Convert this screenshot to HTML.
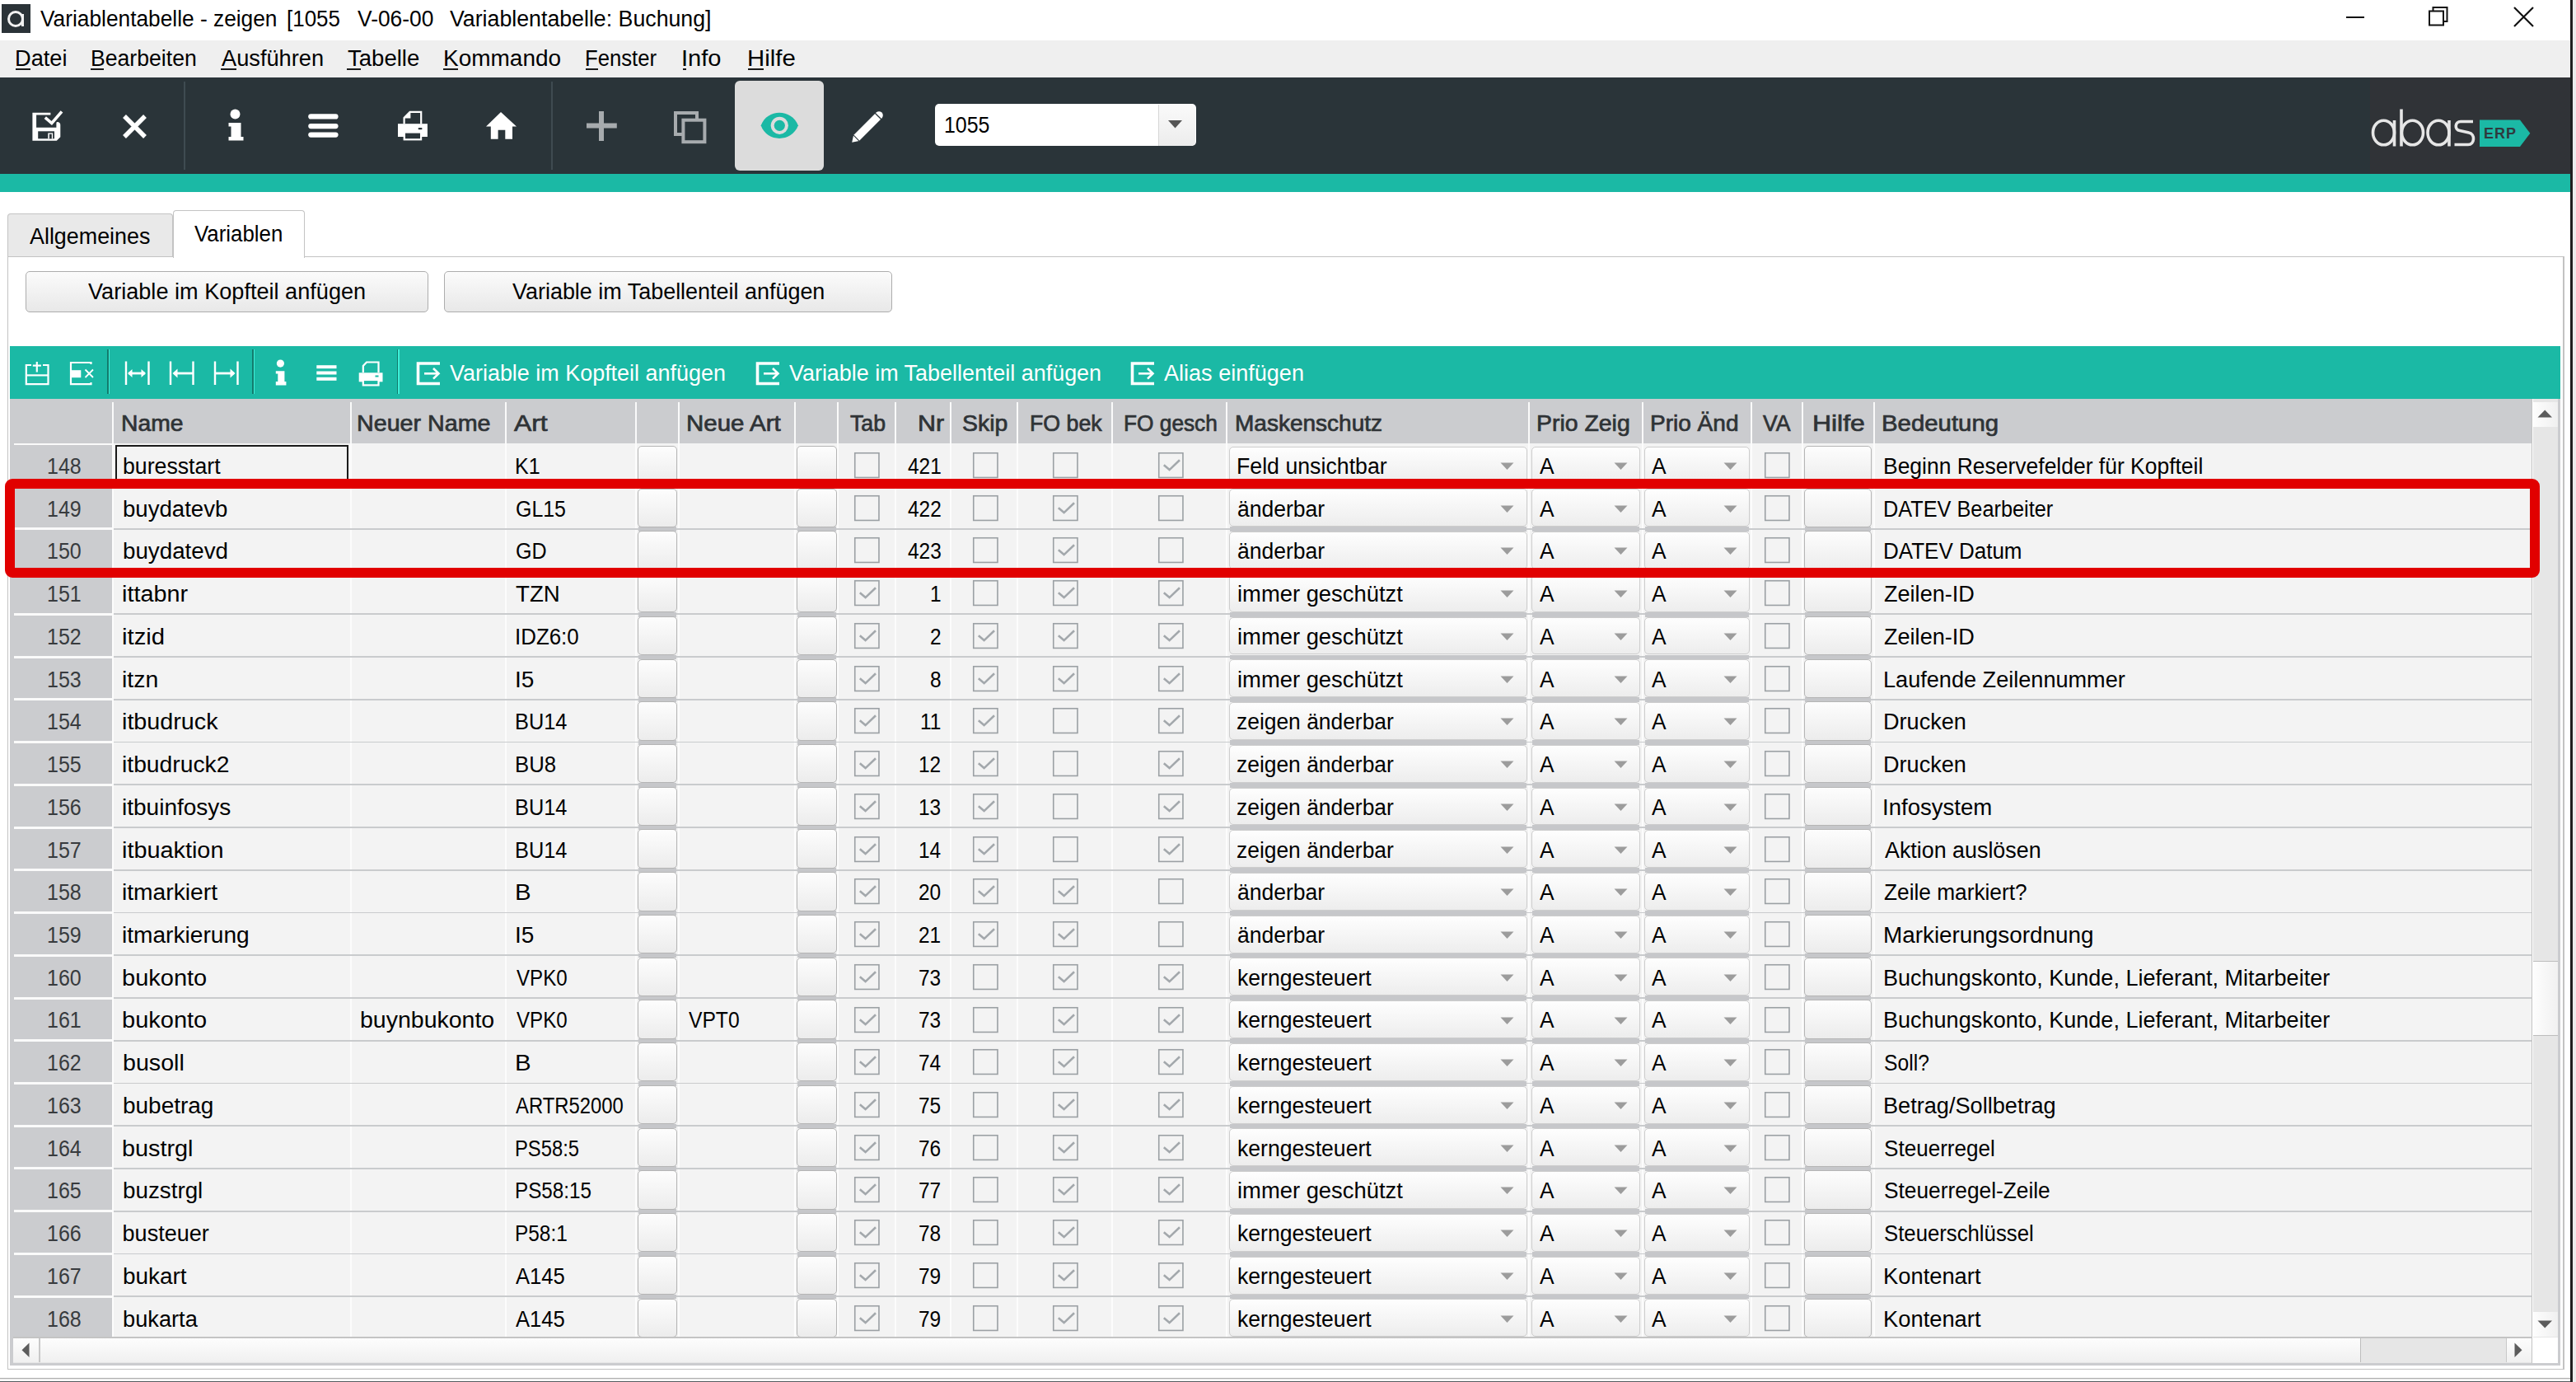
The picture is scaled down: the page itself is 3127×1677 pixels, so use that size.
<!DOCTYPE html>
<html><head><meta charset="utf-8"><style>
html,body{margin:0;padding:0;}
body{width:3127px;height:1677px;position:relative;overflow:hidden;background:#fff;font-family:"Liberation Sans",sans-serif;}
body>div,body>svg{position:absolute;}
.t{white-space:nowrap;}
</style></head><body>
<div style="left:0.00px;top:0.00px;width:3120.00px;height:49.40px;background:#fff"></div>
<div style="left:0.00px;top:49.40px;width:3120.00px;height:44.60px;background:#efefef"></div>
<div style="left:3120.00px;top:0.00px;width:3.00px;height:1677.00px;background:#1f1f1f"></div>
<div style="left:3123.00px;top:0.00px;width:4.00px;height:1677.00px;background:#ececec"></div>
<div style="left:1.50px;top:4.50px;width:35.50px;height:35.50px;background:#2b3338"></div>
<svg style="position:absolute;left:1.50px;top:4.50px;width:35.5px;height:35.5px;overflow:visible" viewBox="0 0 35.5 35.5"><circle cx="17" cy="18" r="8.5" fill="none" stroke="#f2f2f2" stroke-width="3"/><line x1="25.5" y1="12" x2="25.5" y2="27" stroke="#f2f2f2" stroke-width="3"/></svg>
<div class="t" style="left:48.80px;top:10.34px;font-size:27px;line-height:27px;font-weight:400;color:#000;transform:scaleX(0.9738);transform-origin:0 0;">Variablentabelle - zeigen</div>
<div class="t" style="left:348.47px;top:10.34px;font-size:27px;line-height:27px;font-weight:400;color:#000;transform:scaleX(0.9612);transform-origin:0 0;">[1055</div>
<div class="t" style="left:433.90px;top:10.34px;font-size:27px;line-height:27px;font-weight:400;color:#000;transform:scaleX(0.9764);transform-origin:0 0;">V-06-00</div>
<div class="t" style="left:546.40px;top:10.34px;font-size:27px;line-height:27px;font-weight:400;color:#000;transform:scaleX(0.9900);transform-origin:0 0;">Variablentabelle: Buchung]</div>
<div style="left:2847.50px;top:20.20px;width:22.50px;height:2.20px;background:#111"></div>
<svg style="position:absolute;left:2947.00px;top:7.00px;width:28px;height:28px;overflow:visible" viewBox="0 0 28 28"><rect x="2" y="6.5" width="17" height="17" fill="none" stroke="#111" stroke-width="2"/><path d="M6.5 6.5 V2 H23.5 V19 H19" fill="none" stroke="#111" stroke-width="2"/></svg>
<svg style="position:absolute;left:3050.00px;top:7.00px;width:28px;height:28px;overflow:visible" viewBox="0 0 28 28"><path d="M2 2 L25 25 M25 2 L2 25" stroke="#111" stroke-width="2.2"/></svg>
<div class="t" style="left:17.89px;top:57.64px;font-size:27px;line-height:27px;font-weight:400;color:#000;transform:scaleX(1.0068);transform-origin:0 0;">Datei</div>
<div style="left:18.60px;top:83.00px;width:18.11px;height:2.30px;background:#1a1a1a"></div>
<div class="t" style="left:109.63px;top:57.64px;font-size:27px;line-height:27px;font-weight:400;color:#000;transform:scaleX(0.9858);transform-origin:0 0;">Bearbeiten</div>
<div style="left:110.30px;top:83.00px;width:16.20px;height:2.30px;background:#1a1a1a"></div>
<div class="t" style="left:268.90px;top:57.64px;font-size:27px;line-height:27px;font-weight:400;color:#000;transform:scaleX(1.0082);transform-origin:0 0;">Ausführen</div>
<div style="left:267.50px;top:83.00px;width:19.95px;height:2.30px;background:#1a1a1a"></div>
<div class="t" style="left:421.69px;top:57.64px;font-size:27px;line-height:27px;font-weight:400;color:#000;transform:scaleX(1.0203);transform-origin:0 0;">Tabelle</div>
<div style="left:420.80px;top:83.00px;width:17.61px;height:2.30px;background:#1a1a1a"></div>
<div class="t" style="left:537.52px;top:57.64px;font-size:27px;line-height:27px;font-weight:400;color:#000;transform:scaleX(1.0364);transform-origin:0 0;">Kommando</div>
<div style="left:538.30px;top:83.00px;width:18.06px;height:2.30px;background:#1a1a1a"></div>
<div class="t" style="left:710.41px;top:57.64px;font-size:27px;line-height:27px;font-weight:400;color:#000;transform:scaleX(0.9505);transform-origin:0 0;">Fenster</div>
<div style="left:711.00px;top:83.00px;width:14.55px;height:2.30px;background:#1a1a1a"></div>
<div class="t" style="left:827.31px;top:57.64px;font-size:27px;line-height:27px;font-weight:400;color:#000;transform:scaleX(1.0773);transform-origin:0 0;">Info</div>
<div style="left:828.50px;top:83.00px;width:4.69px;height:2.30px;background:#1a1a1a"></div>
<div class="t" style="left:907.41px;top:57.64px;font-size:27px;line-height:27px;font-weight:400;color:#000;transform:scaleX(1.0870);transform-origin:0 0;">Hilfe</div>
<div style="left:908.30px;top:83.00px;width:18.41px;height:2.30px;background:#1a1a1a"></div>
<div style="left:0.00px;top:94.00px;width:3120.00px;height:116.80px;background:#2a3439"></div>
<div style="left:2877.00px;top:94.00px;width:243.00px;height:116.80px;background:#303337"></div>
<div style="left:223.20px;top:99.00px;width:1.60px;height:107.00px;background:#3f4b51"></div>
<div style="left:669.40px;top:99.00px;width:1.60px;height:107.00px;background:#3f4b51"></div>
<svg style="position:absolute;left:38.00px;top:133.00px;width:40px;height:40px;overflow:visible" viewBox="0 0 40 40"><path d="M1.4 3.7 H23.4 V6.5 H6.1 V21.8 H30.4 V16.5 Q30.4 14.8 32.2 15.1 Q35.3 15.8 35.3 18.5 V33.2 L30.8 37.7 H1.4 Z" fill="#fff"/><rect x="8.2" y="26.3" width="19.8" height="9" fill="#2a3439"/><rect x="20.3" y="28.4" width="5.9" height="6.9" fill="#fff"/><rect x="21.9" y="29.7" width="2.9" height="5.6" fill="#2a3439"/><path d="M16.8 9.6 L24.8 16.5 L37 2.3" fill="none" stroke="#fff" stroke-width="3.6"/></svg>
<svg style="position:absolute;left:148.00px;top:138.00px;width:32px;height:32px;overflow:visible" viewBox="0 0 32 32"><path d="M3 3 L28 28 M28 3 L3 28" stroke="#fff" stroke-width="5.5"/></svg>
<svg style="position:absolute;left:276.00px;top:131.00px;width:22px;height:41px;overflow:visible" viewBox="0 0 22 41"><circle cx="9.5" cy="7.5" r="6" fill="#fff"/><path d="M1.5 18 H16.5 V35 H19.5 V39.6 H1.5 V35 H4.5 V22.5 H1.5 Z" fill="#fff"/></svg>
<svg style="position:absolute;left:374.00px;top:137.00px;width:38px;height:32px;overflow:visible" viewBox="0 0 38 32"><g stroke="#fff" stroke-width="6.2" stroke-linecap="round"><line x1="3.3" y1="4.4" x2="33.5" y2="4.4"/><line x1="3.3" y1="16.1" x2="33.5" y2="16.1"/><line x1="3.3" y1="26.6" x2="33.5" y2="26.6"/></g></svg>
<svg style="position:absolute;left:482.00px;top:133.00px;width:38px;height:39px;overflow:visible" viewBox="0 0 38 39"><path d="M8.6 17.5 V10 L15.6 2.9 H29.2 V17.5" fill="none" stroke="#fff" stroke-width="2.2"/><path d="M8.6 10.6 H16.4 V3 Z" fill="#fff"/><rect x="1" y="17.2" width="35.9" height="15.8" fill="#fff"/><rect x="7.6" y="28.3" width="22.6" height="9.1" fill="#fff"/><rect x="10" y="28.6" width="18" height="6.6" fill="#2a3439"/><rect x="25.6" y="22" width="4.9" height="2.3" rx="1" fill="#2a3439"/></svg>
<svg style="position:absolute;left:589.00px;top:135.00px;width:39px;height:35px;overflow:visible" viewBox="0 0 39 35"><path d="M19 1 L38 18.5 H33 V33.8 H24.3 V22.7 H15.6 V33.8 H6.8 V18.5 H1 Z" fill="#fff"/></svg>
<svg style="position:absolute;left:711.00px;top:134.00px;width:39px;height:38px;overflow:visible" viewBox="0 0 39 38"><path d="M19 1 V37 M1 18.5 H37.8" stroke="#a7abae" stroke-width="6"/></svg>
<svg style="position:absolute;left:816.00px;top:133.00px;width:42px;height:42px;overflow:visible" viewBox="0 0 42 42"><path d="M12 30 H4 V4 H30 V11" fill="none" stroke="#a7abae" stroke-width="4"/><rect x="13.4" y="12.7" width="26" height="26.5" fill="none" stroke="#a7abae" stroke-width="4"/></svg>
<div style="left:892.30px;top:98.40px;width:107.70px;height:108.60px;background:#dcdcdc;border-radius:6px"></div>
<svg style="position:absolute;left:922.00px;top:135.00px;width:49px;height:35px;overflow:visible" viewBox="0 0 49 35"><path d="M1.7 17.3 C9 -3.5 39 -3.5 46.9 17.3 C39 38.1 9 38.1 1.7 17.3 Z" fill="#1bb9a5"/><circle cx="24.3" cy="17.3" r="10.6" fill="#dcdcdc"/><circle cx="24.3" cy="17.3" r="6.6" fill="#1bb9a5"/></svg>
<svg style="position:absolute;left:1032.00px;top:133.00px;width:42px;height:42px;overflow:visible" viewBox="0 0 42 42"><path d="M7.5 34.5 L34 8" stroke="#fff" stroke-width="9.6"/><circle cx="35" cy="7" r="4.8" fill="#fff"/><path d="M4.1 31.1 L10.9 37.9 L2.2 39.8 Z" fill="#fff"/><path d="M30.2 4.2 L37.8 11.8" stroke="#2a3439" stroke-width="1.3"/><path d="M4.2 31.2 L10.8 37.8" stroke="#2a3439" stroke-width="1.1"/></svg>
<div style="left:1135.30px;top:126.10px;width:316.30px;height:51.30px;background:#fff;border-radius:5px"></div>
<div style="left:1405.50px;top:127.00px;width:1.50px;height:49.50px;background:#d6d6d6"></div>
<div style="left:1407.00px;top:127.00px;width:43.50px;height:49.50px;background:linear-gradient(#fafafa,#ececec);border-radius:0 5px 5px 0"></div>
<svg style="position:absolute;left:1417.00px;top:145.00px;width:20px;height:12px;overflow:visible" viewBox="0 0 20 12"><path d="M1 1 H18 L9.5 10.5 Z" fill="#555"/></svg>
<div class="t" style="left:1146.15px;top:138.64px;font-size:27px;line-height:27px;font-weight:400;color:#000;transform:scaleX(0.9227);transform-origin:0 0;">1055</div>
<svg style="position:absolute;left:2879.00px;top:144.00px;width:200px;height:40px;overflow:visible" viewBox="0 0 200 40"><g fill="none" stroke="#e6e6e6" stroke-width="3.6"><ellipse cx="14.5" cy="17" rx="13" ry="14.8"/><line x1="27.5" y1="2" x2="27.5" y2="33.5"/><line x1="36" y1="-11.5" x2="36" y2="33.5"/><ellipse cx="49.5" cy="17" rx="13" ry="14.8"/><ellipse cx="81" cy="17" rx="13" ry="14.8"/><line x1="94" y1="2" x2="94" y2="33.5"/><path d="M123 3.5 H108 C101 3.5 100 13.5 107 14.5 L118 17 C126 18.5 125 31.5 117 31.5 H100.5"/></g><path d="M131 1.5 H180 L192.3 17.8 L180 34 H131 Z" fill="#1bb9a5"/></svg>
<div class="t" style="left:3015px;top:153px;font-size:18px;line-height:18px;font-weight:700;color:#2f3a3e;letter-spacing:1px">ERP</div>
<div style="left:0.00px;top:210.80px;width:3120.00px;height:22.50px;background:#1bb9a5"></div>
<div style="left:8.50px;top:259.40px;width:201.10px;height:52.60px;background:#e9e9e9;border:1.5px solid #c3c3c3;border-bottom:none;border-radius:4px 4px 0 0;box-sizing:border-box"></div>
<div style="left:209.60px;top:254.80px;width:160.00px;height:58.20px;background:#fff;border:1.5px solid #c3c3c3;border-bottom:none;border-radius:4px 4px 0 0;box-sizing:border-box"></div>
<div class="t" style="left:35.60px;top:273.84px;font-size:27px;line-height:27px;font-weight:400;color:#000;transform:scaleX(0.9952);transform-origin:0 0;">Allgemeines</div>
<div class="t" style="left:235.90px;top:271.44px;font-size:27px;line-height:27px;font-weight:400;color:#000;transform:scaleX(0.9574);transform-origin:0 0;">Variablen</div>
<div style="left:8.50px;top:310.80px;width:201.10px;height:1.50px;background:#c3c3c3"></div>
<div style="left:369.60px;top:310.80px;width:2742.90px;height:1.50px;background:#c3c3c3"></div>
<div style="left:8.50px;top:310.80px;width:1.50px;height:1351.20px;background:#c3c3c3"></div>
<div style="left:8.50px;top:1660.50px;width:3104.00px;height:1.50px;background:#c3c3c3"></div>
<div style="left:3111.00px;top:310.80px;width:1.50px;height:1351.20px;background:#c3c3c3"></div>
<div style="left:30.70px;top:329.30px;width:489.30px;height:50.10px;background:linear-gradient(#fbfbfb,#e8e8e8);border:1.5px solid #adadad;border-radius:5px;box-sizing:border-box"></div>
<div style="left:539.30px;top:329.30px;width:544.00px;height:50.10px;background:linear-gradient(#fbfbfb,#e8e8e8);border:1.5px solid #adadad;border-radius:5px;box-sizing:border-box"></div>
<div class="t" style="left:106.60px;top:341.34px;font-size:27px;line-height:27px;font-weight:400;color:#000;transform:scaleX(1.0042);transform-origin:0 0;">Variable im Kopfteil anfügen</div>
<div class="t" style="left:622.40px;top:341.34px;font-size:27px;line-height:27px;font-weight:400;color:#000;transform:scaleX(0.9976);transform-origin:0 0;">Variable im Tabellenteil anfügen</div>
<div style="left:12.40px;top:420.20px;width:3096.00px;height:63.40px;background:#1bb9a5"></div>
<div style="left:130.00px;top:424.00px;width:1.50px;height:54.00px;background:#137a6c"></div>
<div style="left:131.50px;top:424.00px;width:1.50px;height:54.00px;background:#3ef0d8"></div>
<div style="left:306.00px;top:424.00px;width:1.50px;height:54.00px;background:#137a6c"></div>
<div style="left:307.50px;top:424.00px;width:1.50px;height:54.00px;background:#3ef0d8"></div>
<div style="left:481.50px;top:424.00px;width:1.50px;height:54.00px;background:#137a6c"></div>
<div style="left:483.00px;top:424.00px;width:1.50px;height:54.00px;background:#3ef0d8"></div>
<svg style="position:absolute;left:29.00px;top:437.00px;width:33px;height:33px;overflow:visible" viewBox="0 0 33 33"><g fill="none" stroke="#fff" stroke-width="2.2"><path d="M9 6 H2.8 V29.2 H29.5 V6 H23"/><line x1="2.8" y1="18.4" x2="29.5" y2="18.4"/><line x1="15.8" y1="2" x2="15.8" y2="14.5"/><line x1="10.8" y1="6.6" x2="20.9" y2="6.6"/></g></svg>
<svg style="position:absolute;left:83.00px;top:437.00px;width:33px;height:33px;overflow:visible" viewBox="0 0 33 33"><g fill="none" stroke="#fff" stroke-width="2.2"><path d="M27.5 5 V3 H3 V29.2 H27.5 V27"/></g><rect x="4" y="12.2" width="11.3" height="9" fill="#fff"/><path d="M20.5 11.5 L30 21 M30 11.5 L20.5 21" stroke="#fff" stroke-width="1.8"/></svg>
<svg style="position:absolute;left:152.00px;top:437.00px;width:30px;height:32px;overflow:visible" viewBox="0 0 30 32"><path d="M1 1.5 V30 M28.5 1.5 V30" stroke="#fff" stroke-width="2.4"/><path d="M4 16 H24" stroke="#fff" stroke-width="2.8"/><path d="M3 16 L8.5 11 V21 Z M25 16 L19.5 11 V21 Z" fill="#fff"/></svg>
<svg style="position:absolute;left:206.00px;top:437.00px;width:30px;height:32px;overflow:visible" viewBox="0 0 30 32"><path d="M1 1.5 V30 M28.5 1.5 V30" stroke="#fff" stroke-width="2.4"/><path d="M5 16 H28" stroke="#fff" stroke-width="2.8"/><path d="M3.5 16 L9.5 10.5 V21.5 Z" fill="#fff"/></svg>
<svg style="position:absolute;left:260.00px;top:437.00px;width:30px;height:32px;overflow:visible" viewBox="0 0 30 32"><path d="M1 1.5 V30 M28.5 1.5 V30" stroke="#fff" stroke-width="2.4"/><path d="M1 16 H24" stroke="#fff" stroke-width="2.8"/><path d="M25.5 16 L19.5 10.5 V21.5 Z" fill="#fff"/></svg>
<svg style="position:absolute;left:333.00px;top:435.00px;width:17px;height:34px;overflow:visible" viewBox="0 0 17 34"><circle cx="7.4" cy="6.1" r="4.6" fill="#fff"/><path d="M1.8 15.2 H12.4 V28 H14.4 V32.4 H1.8 V28 H4.3 V18.5 H1.8 Z" fill="#fff"/></svg>
<svg style="position:absolute;left:383.00px;top:441.00px;width:27px;height:22px;overflow:visible" viewBox="0 0 27 22"><g stroke="#fff" stroke-width="4"><line x1="1.3" y1="4.2" x2="25.5" y2="4.2"/><line x1="1.3" y1="11.5" x2="25.5" y2="11.5"/><line x1="1.3" y1="18.8" x2="25.5" y2="18.8"/></g></svg>
<svg style="position:absolute;left:435.00px;top:438.00px;width:31px;height:31px;overflow:visible" viewBox="0 0 31 31"><path d="M5.8 14 V6 L10 1.5 H24.5 V14" fill="none" stroke="#fff" stroke-width="2.2"/><rect x="0.7" y="14.3" width="28.8" height="11" fill="#fff"/><rect x="5.8" y="23" width="18.7" height="6.4" fill="#1bb9a5" stroke="#fff" stroke-width="2.2"/><rect x="20.5" y="17.5" width="4" height="2" fill="#1bb9a5"/></svg>
<svg style="position:absolute;left:505.00px;top:438.00px;width:31px;height:31px;overflow:visible" viewBox="0 0 31 31"><path d="M29 3 H2.5 V27.5 H29" fill="none" stroke="#fff" stroke-width="3.6"/><path d="M10 15.3 H27" stroke="#fff" stroke-width="2.6"/><path d="M21 9 L27.5 15.3 L21 21.6" fill="none" stroke="#fff" stroke-width="2.6"/></svg>
<svg style="position:absolute;left:917.00px;top:438.00px;width:31px;height:31px;overflow:visible" viewBox="0 0 31 31"><path d="M29 3 H2.5 V27.5 H29" fill="none" stroke="#fff" stroke-width="3.6"/><path d="M10 15.3 H27" stroke="#fff" stroke-width="2.6"/><path d="M21 9 L27.5 15.3 L21 21.6" fill="none" stroke="#fff" stroke-width="2.6"/></svg>
<svg style="position:absolute;left:1371.50px;top:438.00px;width:31px;height:31px;overflow:visible" viewBox="0 0 31 31"><path d="M29 3 H2.5 V27.5 H29" fill="none" stroke="#fff" stroke-width="3.6"/><path d="M10 15.3 H27" stroke="#fff" stroke-width="2.6"/><path d="M21 9 L27.5 15.3 L21 21.6" fill="none" stroke="#fff" stroke-width="2.6"/></svg>
<div class="t" style="left:546.40px;top:440.04px;font-size:27px;line-height:27px;font-weight:400;color:#fff;transform:scaleX(0.9976);transform-origin:0 0;">Variable im Kopfteil anfügen</div>
<div class="t" style="left:958.00px;top:440.04px;font-size:27px;line-height:27px;font-weight:400;color:#fff;transform:scaleX(0.9968);transform-origin:0 0;">Variable im Tabellenteil anfügen</div>
<div class="t" style="left:1412.80px;top:440.04px;font-size:27px;line-height:27px;font-weight:400;color:#fff;transform:scaleX(1.0018);transform-origin:0 0;">Alias einfügen</div>
<div style="left:12.40px;top:483.60px;width:3.80px;height:1173.80px;background:#cbcccf"></div>
<div style="left:12.40px;top:1653.60px;width:3095.30px;height:3.80px;background:#cbcccf"></div>
<div style="left:3104.60px;top:483.60px;width:3.10px;height:1173.80px;background:#cbcccf"></div>
<div style="left:10.00px;top:312.30px;width:2.40px;height:1348.20px;background:#fff"></div>
<div style="left:16.20px;top:483.60px;width:3057.10px;height:54.80px;background:#cbcccf"></div>
<div style="left:136.30px;top:487.60px;width:2.00px;height:50.80px;background:#fafafa"></div>
<div style="left:424.60px;top:487.60px;width:2.00px;height:50.80px;background:#fafafa"></div>
<div style="left:613.40px;top:487.60px;width:2.00px;height:50.80px;background:#fafafa"></div>
<div style="left:771.40px;top:487.60px;width:2.00px;height:50.80px;background:#fafafa"></div>
<div style="left:822.60px;top:487.60px;width:2.00px;height:50.80px;background:#fafafa"></div>
<div style="left:964.20px;top:487.60px;width:2.00px;height:50.80px;background:#fafafa"></div>
<div style="left:1016.00px;top:487.60px;width:2.00px;height:50.80px;background:#fafafa"></div>
<div style="left:1085.80px;top:487.60px;width:2.00px;height:50.80px;background:#fafafa"></div>
<div style="left:1153.40px;top:487.60px;width:2.00px;height:50.80px;background:#fafafa"></div>
<div style="left:1234.10px;top:487.60px;width:2.00px;height:50.80px;background:#fafafa"></div>
<div style="left:1349.40px;top:487.60px;width:2.00px;height:50.80px;background:#fafafa"></div>
<div style="left:1488.00px;top:487.60px;width:2.00px;height:50.80px;background:#fafafa"></div>
<div style="left:1855.20px;top:487.60px;width:2.00px;height:50.80px;background:#fafafa"></div>
<div style="left:1992.60px;top:487.60px;width:2.00px;height:50.80px;background:#fafafa"></div>
<div style="left:2125.40px;top:487.60px;width:2.00px;height:50.80px;background:#fafafa"></div>
<div style="left:2186.70px;top:487.60px;width:2.00px;height:50.80px;background:#fafafa"></div>
<div style="left:2273.60px;top:487.60px;width:2.00px;height:50.80px;background:#fafafa"></div>
<div class="t" style="left:146.56px;top:501.14px;font-size:27px;line-height:27px;font-weight:400;color:#2f3336;-webkit-text-stroke:0.7px #2f3336;transform:scaleX(1.0476);transform-origin:0 0;">Name</div>
<div class="t" style="left:433.44px;top:501.14px;font-size:27px;line-height:27px;font-weight:400;color:#2f3336;-webkit-text-stroke:0.7px #2f3336;transform:scaleX(1.0619);transform-origin:0 0;">Neuer Name</div>
<div class="t" style="left:624.30px;top:501.14px;font-size:27px;line-height:27px;font-weight:400;color:#2f3336;-webkit-text-stroke:0.7px #2f3336;transform:scaleX(1.1805);transform-origin:0 0;">Art</div>
<div class="t" style="left:833.28px;top:501.14px;font-size:27px;line-height:27px;font-weight:400;color:#2f3336;-webkit-text-stroke:0.7px #2f3336;transform:scaleX(1.0919);transform-origin:0 0;">Neue Art</div>
<div class="t" style="left:1031.75px;top:501.14px;font-size:27px;line-height:27px;font-weight:400;color:#2f3336;-webkit-text-stroke:0.7px #2f3336;transform:scaleX(0.9882);transform-origin:0 0;">Tab</div>
<div class="t" style="left:1113.91px;top:501.14px;font-size:27px;line-height:27px;font-weight:400;color:#2f3336;-webkit-text-stroke:0.7px #2f3336;transform:scaleX(1.1278);transform-origin:0 0;">Nr</div>
<div class="t" style="left:1167.80px;top:501.14px;font-size:27px;line-height:27px;font-weight:400;color:#2f3336;-webkit-text-stroke:0.7px #2f3336;transform:scaleX(1.0530);transform-origin:0 0;">Skip</div>
<div class="t" style="left:1249.57px;top:501.14px;font-size:27px;line-height:27px;font-weight:400;color:#2f3336;-webkit-text-stroke:0.7px #2f3336;transform:scaleX(0.9908);transform-origin:0 0;">FO bek</div>
<div class="t" style="left:1363.70px;top:501.14px;font-size:27px;line-height:27px;font-weight:400;color:#2f3336;-webkit-text-stroke:0.7px #2f3336;transform:scaleX(0.9728);transform-origin:0 0;">FO gesch</div>
<div class="t" style="left:1499.08px;top:501.14px;font-size:27px;line-height:27px;font-weight:400;color:#2f3336;-webkit-text-stroke:0.7px #2f3336;transform:scaleX(1.0377);transform-origin:0 0;">Maskenschutz</div>
<div class="t" style="left:1864.65px;top:501.14px;font-size:27px;line-height:27px;font-weight:400;color:#2f3336;-webkit-text-stroke:0.7px #2f3336;transform:scaleX(1.0525);transform-origin:0 0;">Prio Zeig</div>
<div class="t" style="left:2002.88px;top:501.14px;font-size:27px;line-height:27px;font-weight:400;color:#2f3336;-webkit-text-stroke:0.7px #2f3336;transform:scaleX(1.0379);transform-origin:0 0;">Prio Änd</div>
<div class="t" style="left:2140.25px;top:501.14px;font-size:27px;line-height:27px;font-weight:400;color:#2f3336;-webkit-text-stroke:0.7px #2f3336;transform:scaleX(0.9855);transform-origin:0 0;">VA</div>
<div class="t" style="left:2199.81px;top:501.14px;font-size:27px;line-height:27px;font-weight:400;color:#2f3336;-webkit-text-stroke:0.7px #2f3336;transform:scaleX(1.1813);transform-origin:0 0;">Hilfe</div>
<div class="t" style="left:2284.29px;top:501.14px;font-size:27px;line-height:27px;font-weight:400;color:#2f3336;-webkit-text-stroke:0.7px #2f3336;transform:scaleX(1.0879);transform-origin:0 0;">Bedeutung</div>
<div style="left:137.30px;top:538.40px;width:2936.00px;height:1084.60px;background:#f3f3f3"></div>
<div style="left:16.20px;top:538.40px;width:121.10px;height:1084.60px;background:#cbcccf"></div>
<div style="left:136.30px;top:538.40px;width:2.00px;height:1084.60px;background:#fcfcfc"></div>
<div style="left:424.60px;top:538.40px;width:2.00px;height:1084.60px;background:#fcfcfc"></div>
<div style="left:613.40px;top:538.40px;width:2.00px;height:1084.60px;background:#fcfcfc"></div>
<div style="left:771.40px;top:538.40px;width:2.00px;height:1084.60px;background:#fcfcfc"></div>
<div style="left:822.60px;top:538.40px;width:2.00px;height:1084.60px;background:#fcfcfc"></div>
<div style="left:964.20px;top:538.40px;width:2.00px;height:1084.60px;background:#fcfcfc"></div>
<div style="left:1016.00px;top:538.40px;width:2.00px;height:1084.60px;background:#fcfcfc"></div>
<div style="left:1085.80px;top:538.40px;width:2.00px;height:1084.60px;background:#fcfcfc"></div>
<div style="left:1153.40px;top:538.40px;width:2.00px;height:1084.60px;background:#fcfcfc"></div>
<div style="left:1234.10px;top:538.40px;width:2.00px;height:1084.60px;background:#fcfcfc"></div>
<div style="left:1349.40px;top:538.40px;width:2.00px;height:1084.60px;background:#fcfcfc"></div>
<div style="left:1488.00px;top:538.40px;width:2.00px;height:1084.60px;background:#fcfcfc"></div>
<div style="left:1855.20px;top:538.40px;width:2.00px;height:1084.60px;background:#fcfcfc"></div>
<div style="left:1992.60px;top:538.40px;width:2.00px;height:1084.60px;background:#fcfcfc"></div>
<div style="left:2125.40px;top:538.40px;width:2.00px;height:1084.60px;background:#fcfcfc"></div>
<div style="left:2186.70px;top:538.40px;width:2.00px;height:1084.60px;background:#fcfcfc"></div>
<div style="left:2273.60px;top:538.40px;width:2.00px;height:1084.60px;background:#fcfcfc"></div>
<div style="left:138.30px;top:589.24px;width:2935.00px;height:1.80px;background:#c9cbcd"></div>
<div style="left:17.00px;top:588.64px;width:119.30px;height:3.00px;background:#fafafa"></div>
<div style="left:138.30px;top:640.98px;width:2935.00px;height:1.80px;background:#c9cbcd"></div>
<div style="left:17.00px;top:640.38px;width:119.30px;height:3.00px;background:#fafafa"></div>
<div style="left:138.30px;top:692.72px;width:2935.00px;height:1.80px;background:#c9cbcd"></div>
<div style="left:17.00px;top:692.12px;width:119.30px;height:3.00px;background:#fafafa"></div>
<div style="left:138.30px;top:744.46px;width:2935.00px;height:1.80px;background:#c9cbcd"></div>
<div style="left:17.00px;top:743.86px;width:119.30px;height:3.00px;background:#fafafa"></div>
<div style="left:138.30px;top:796.20px;width:2935.00px;height:1.80px;background:#c9cbcd"></div>
<div style="left:17.00px;top:795.60px;width:119.30px;height:3.00px;background:#fafafa"></div>
<div style="left:138.30px;top:847.94px;width:2935.00px;height:1.80px;background:#c9cbcd"></div>
<div style="left:17.00px;top:847.34px;width:119.30px;height:3.00px;background:#fafafa"></div>
<div style="left:138.30px;top:899.68px;width:2935.00px;height:1.80px;background:#c9cbcd"></div>
<div style="left:17.00px;top:899.08px;width:119.30px;height:3.00px;background:#fafafa"></div>
<div style="left:138.30px;top:951.42px;width:2935.00px;height:1.80px;background:#c9cbcd"></div>
<div style="left:17.00px;top:950.82px;width:119.30px;height:3.00px;background:#fafafa"></div>
<div style="left:138.30px;top:1003.16px;width:2935.00px;height:1.80px;background:#c9cbcd"></div>
<div style="left:17.00px;top:1002.56px;width:119.30px;height:3.00px;background:#fafafa"></div>
<div style="left:138.30px;top:1054.90px;width:2935.00px;height:1.80px;background:#c9cbcd"></div>
<div style="left:17.00px;top:1054.30px;width:119.30px;height:3.00px;background:#fafafa"></div>
<div style="left:138.30px;top:1106.64px;width:2935.00px;height:1.80px;background:#c9cbcd"></div>
<div style="left:17.00px;top:1106.04px;width:119.30px;height:3.00px;background:#fafafa"></div>
<div style="left:138.30px;top:1158.38px;width:2935.00px;height:1.80px;background:#c9cbcd"></div>
<div style="left:17.00px;top:1157.78px;width:119.30px;height:3.00px;background:#fafafa"></div>
<div style="left:138.30px;top:1210.12px;width:2935.00px;height:1.80px;background:#c9cbcd"></div>
<div style="left:17.00px;top:1209.52px;width:119.30px;height:3.00px;background:#fafafa"></div>
<div style="left:138.30px;top:1261.86px;width:2935.00px;height:1.80px;background:#c9cbcd"></div>
<div style="left:17.00px;top:1261.26px;width:119.30px;height:3.00px;background:#fafafa"></div>
<div style="left:138.30px;top:1313.60px;width:2935.00px;height:1.80px;background:#c9cbcd"></div>
<div style="left:17.00px;top:1313.00px;width:119.30px;height:3.00px;background:#fafafa"></div>
<div style="left:138.30px;top:1365.34px;width:2935.00px;height:1.80px;background:#c9cbcd"></div>
<div style="left:17.00px;top:1364.74px;width:119.30px;height:3.00px;background:#fafafa"></div>
<div style="left:138.30px;top:1417.08px;width:2935.00px;height:1.80px;background:#c9cbcd"></div>
<div style="left:17.00px;top:1416.48px;width:119.30px;height:3.00px;background:#fafafa"></div>
<div style="left:138.30px;top:1468.82px;width:2935.00px;height:1.80px;background:#c9cbcd"></div>
<div style="left:17.00px;top:1468.22px;width:119.30px;height:3.00px;background:#fafafa"></div>
<div style="left:138.30px;top:1520.56px;width:2935.00px;height:1.80px;background:#c9cbcd"></div>
<div style="left:17.00px;top:1519.96px;width:119.30px;height:3.00px;background:#fafafa"></div>
<div style="left:138.30px;top:1572.30px;width:2935.00px;height:1.80px;background:#c9cbcd"></div>
<div style="left:17.00px;top:1571.70px;width:119.30px;height:3.00px;background:#fafafa"></div>
<div style="left:17.00px;top:537.90px;width:119.30px;height:2.50px;background:#fafafa"></div>
<div style="left:774.50px;top:587.54px;width:46.20px;height:5.80px;background:#c6c7ca"></div>
<div style="left:967.50px;top:587.54px;width:47.00px;height:5.80px;background:#c6c7ca"></div>
<div style="left:1492.50px;top:587.54px;width:360.30px;height:5.80px;background:#c6c7ca"></div>
<div style="left:1859.50px;top:587.54px;width:130.00px;height:5.80px;background:#c6c7ca"></div>
<div style="left:1997.00px;top:587.54px;width:125.50px;height:5.80px;background:#c6c7ca"></div>
<div style="left:2191.00px;top:587.54px;width:79.60px;height:5.80px;background:#c6c7ca"></div>
<div style="left:774.50px;top:639.28px;width:46.20px;height:5.80px;background:#c6c7ca"></div>
<div style="left:967.50px;top:639.28px;width:47.00px;height:5.80px;background:#c6c7ca"></div>
<div style="left:1492.50px;top:639.28px;width:360.30px;height:5.80px;background:#c6c7ca"></div>
<div style="left:1859.50px;top:639.28px;width:130.00px;height:5.80px;background:#c6c7ca"></div>
<div style="left:1997.00px;top:639.28px;width:125.50px;height:5.80px;background:#c6c7ca"></div>
<div style="left:2191.00px;top:639.28px;width:79.60px;height:5.80px;background:#c6c7ca"></div>
<div style="left:774.50px;top:691.02px;width:46.20px;height:5.80px;background:#c6c7ca"></div>
<div style="left:967.50px;top:691.02px;width:47.00px;height:5.80px;background:#c6c7ca"></div>
<div style="left:1492.50px;top:691.02px;width:360.30px;height:5.80px;background:#c6c7ca"></div>
<div style="left:1859.50px;top:691.02px;width:130.00px;height:5.80px;background:#c6c7ca"></div>
<div style="left:1997.00px;top:691.02px;width:125.50px;height:5.80px;background:#c6c7ca"></div>
<div style="left:2191.00px;top:691.02px;width:79.60px;height:5.80px;background:#c6c7ca"></div>
<div style="left:774.50px;top:742.76px;width:46.20px;height:5.80px;background:#c6c7ca"></div>
<div style="left:967.50px;top:742.76px;width:47.00px;height:5.80px;background:#c6c7ca"></div>
<div style="left:1492.50px;top:742.76px;width:360.30px;height:5.80px;background:#c6c7ca"></div>
<div style="left:1859.50px;top:742.76px;width:130.00px;height:5.80px;background:#c6c7ca"></div>
<div style="left:1997.00px;top:742.76px;width:125.50px;height:5.80px;background:#c6c7ca"></div>
<div style="left:2191.00px;top:742.76px;width:79.60px;height:5.80px;background:#c6c7ca"></div>
<div style="left:774.50px;top:794.50px;width:46.20px;height:5.80px;background:#c6c7ca"></div>
<div style="left:967.50px;top:794.50px;width:47.00px;height:5.80px;background:#c6c7ca"></div>
<div style="left:1492.50px;top:794.50px;width:360.30px;height:5.80px;background:#c6c7ca"></div>
<div style="left:1859.50px;top:794.50px;width:130.00px;height:5.80px;background:#c6c7ca"></div>
<div style="left:1997.00px;top:794.50px;width:125.50px;height:5.80px;background:#c6c7ca"></div>
<div style="left:2191.00px;top:794.50px;width:79.60px;height:5.80px;background:#c6c7ca"></div>
<div style="left:774.50px;top:846.24px;width:46.20px;height:5.80px;background:#c6c7ca"></div>
<div style="left:967.50px;top:846.24px;width:47.00px;height:5.80px;background:#c6c7ca"></div>
<div style="left:1492.50px;top:846.24px;width:360.30px;height:5.80px;background:#c6c7ca"></div>
<div style="left:1859.50px;top:846.24px;width:130.00px;height:5.80px;background:#c6c7ca"></div>
<div style="left:1997.00px;top:846.24px;width:125.50px;height:5.80px;background:#c6c7ca"></div>
<div style="left:2191.00px;top:846.24px;width:79.60px;height:5.80px;background:#c6c7ca"></div>
<div style="left:774.50px;top:897.98px;width:46.20px;height:5.80px;background:#c6c7ca"></div>
<div style="left:967.50px;top:897.98px;width:47.00px;height:5.80px;background:#c6c7ca"></div>
<div style="left:1492.50px;top:897.98px;width:360.30px;height:5.80px;background:#c6c7ca"></div>
<div style="left:1859.50px;top:897.98px;width:130.00px;height:5.80px;background:#c6c7ca"></div>
<div style="left:1997.00px;top:897.98px;width:125.50px;height:5.80px;background:#c6c7ca"></div>
<div style="left:2191.00px;top:897.98px;width:79.60px;height:5.80px;background:#c6c7ca"></div>
<div style="left:774.50px;top:949.72px;width:46.20px;height:5.80px;background:#c6c7ca"></div>
<div style="left:967.50px;top:949.72px;width:47.00px;height:5.80px;background:#c6c7ca"></div>
<div style="left:1492.50px;top:949.72px;width:360.30px;height:5.80px;background:#c6c7ca"></div>
<div style="left:1859.50px;top:949.72px;width:130.00px;height:5.80px;background:#c6c7ca"></div>
<div style="left:1997.00px;top:949.72px;width:125.50px;height:5.80px;background:#c6c7ca"></div>
<div style="left:2191.00px;top:949.72px;width:79.60px;height:5.80px;background:#c6c7ca"></div>
<div style="left:774.50px;top:1001.46px;width:46.20px;height:5.80px;background:#c6c7ca"></div>
<div style="left:967.50px;top:1001.46px;width:47.00px;height:5.80px;background:#c6c7ca"></div>
<div style="left:1492.50px;top:1001.46px;width:360.30px;height:5.80px;background:#c6c7ca"></div>
<div style="left:1859.50px;top:1001.46px;width:130.00px;height:5.80px;background:#c6c7ca"></div>
<div style="left:1997.00px;top:1001.46px;width:125.50px;height:5.80px;background:#c6c7ca"></div>
<div style="left:2191.00px;top:1001.46px;width:79.60px;height:5.80px;background:#c6c7ca"></div>
<div style="left:774.50px;top:1053.20px;width:46.20px;height:5.80px;background:#c6c7ca"></div>
<div style="left:967.50px;top:1053.20px;width:47.00px;height:5.80px;background:#c6c7ca"></div>
<div style="left:1492.50px;top:1053.20px;width:360.30px;height:5.80px;background:#c6c7ca"></div>
<div style="left:1859.50px;top:1053.20px;width:130.00px;height:5.80px;background:#c6c7ca"></div>
<div style="left:1997.00px;top:1053.20px;width:125.50px;height:5.80px;background:#c6c7ca"></div>
<div style="left:2191.00px;top:1053.20px;width:79.60px;height:5.80px;background:#c6c7ca"></div>
<div style="left:774.50px;top:1104.94px;width:46.20px;height:5.80px;background:#c6c7ca"></div>
<div style="left:967.50px;top:1104.94px;width:47.00px;height:5.80px;background:#c6c7ca"></div>
<div style="left:1492.50px;top:1104.94px;width:360.30px;height:5.80px;background:#c6c7ca"></div>
<div style="left:1859.50px;top:1104.94px;width:130.00px;height:5.80px;background:#c6c7ca"></div>
<div style="left:1997.00px;top:1104.94px;width:125.50px;height:5.80px;background:#c6c7ca"></div>
<div style="left:2191.00px;top:1104.94px;width:79.60px;height:5.80px;background:#c6c7ca"></div>
<div style="left:774.50px;top:1156.68px;width:46.20px;height:5.80px;background:#c6c7ca"></div>
<div style="left:967.50px;top:1156.68px;width:47.00px;height:5.80px;background:#c6c7ca"></div>
<div style="left:1492.50px;top:1156.68px;width:360.30px;height:5.80px;background:#c6c7ca"></div>
<div style="left:1859.50px;top:1156.68px;width:130.00px;height:5.80px;background:#c6c7ca"></div>
<div style="left:1997.00px;top:1156.68px;width:125.50px;height:5.80px;background:#c6c7ca"></div>
<div style="left:2191.00px;top:1156.68px;width:79.60px;height:5.80px;background:#c6c7ca"></div>
<div style="left:774.50px;top:1208.42px;width:46.20px;height:5.80px;background:#c6c7ca"></div>
<div style="left:967.50px;top:1208.42px;width:47.00px;height:5.80px;background:#c6c7ca"></div>
<div style="left:1492.50px;top:1208.42px;width:360.30px;height:5.80px;background:#c6c7ca"></div>
<div style="left:1859.50px;top:1208.42px;width:130.00px;height:5.80px;background:#c6c7ca"></div>
<div style="left:1997.00px;top:1208.42px;width:125.50px;height:5.80px;background:#c6c7ca"></div>
<div style="left:2191.00px;top:1208.42px;width:79.60px;height:5.80px;background:#c6c7ca"></div>
<div style="left:774.50px;top:1260.16px;width:46.20px;height:5.80px;background:#c6c7ca"></div>
<div style="left:967.50px;top:1260.16px;width:47.00px;height:5.80px;background:#c6c7ca"></div>
<div style="left:1492.50px;top:1260.16px;width:360.30px;height:5.80px;background:#c6c7ca"></div>
<div style="left:1859.50px;top:1260.16px;width:130.00px;height:5.80px;background:#c6c7ca"></div>
<div style="left:1997.00px;top:1260.16px;width:125.50px;height:5.80px;background:#c6c7ca"></div>
<div style="left:2191.00px;top:1260.16px;width:79.60px;height:5.80px;background:#c6c7ca"></div>
<div style="left:774.50px;top:1311.90px;width:46.20px;height:5.80px;background:#c6c7ca"></div>
<div style="left:967.50px;top:1311.90px;width:47.00px;height:5.80px;background:#c6c7ca"></div>
<div style="left:1492.50px;top:1311.90px;width:360.30px;height:5.80px;background:#c6c7ca"></div>
<div style="left:1859.50px;top:1311.90px;width:130.00px;height:5.80px;background:#c6c7ca"></div>
<div style="left:1997.00px;top:1311.90px;width:125.50px;height:5.80px;background:#c6c7ca"></div>
<div style="left:2191.00px;top:1311.90px;width:79.60px;height:5.80px;background:#c6c7ca"></div>
<div style="left:774.50px;top:1363.64px;width:46.20px;height:5.80px;background:#c6c7ca"></div>
<div style="left:967.50px;top:1363.64px;width:47.00px;height:5.80px;background:#c6c7ca"></div>
<div style="left:1492.50px;top:1363.64px;width:360.30px;height:5.80px;background:#c6c7ca"></div>
<div style="left:1859.50px;top:1363.64px;width:130.00px;height:5.80px;background:#c6c7ca"></div>
<div style="left:1997.00px;top:1363.64px;width:125.50px;height:5.80px;background:#c6c7ca"></div>
<div style="left:2191.00px;top:1363.64px;width:79.60px;height:5.80px;background:#c6c7ca"></div>
<div style="left:774.50px;top:1415.38px;width:46.20px;height:5.80px;background:#c6c7ca"></div>
<div style="left:967.50px;top:1415.38px;width:47.00px;height:5.80px;background:#c6c7ca"></div>
<div style="left:1492.50px;top:1415.38px;width:360.30px;height:5.80px;background:#c6c7ca"></div>
<div style="left:1859.50px;top:1415.38px;width:130.00px;height:5.80px;background:#c6c7ca"></div>
<div style="left:1997.00px;top:1415.38px;width:125.50px;height:5.80px;background:#c6c7ca"></div>
<div style="left:2191.00px;top:1415.38px;width:79.60px;height:5.80px;background:#c6c7ca"></div>
<div style="left:774.50px;top:1467.12px;width:46.20px;height:5.80px;background:#c6c7ca"></div>
<div style="left:967.50px;top:1467.12px;width:47.00px;height:5.80px;background:#c6c7ca"></div>
<div style="left:1492.50px;top:1467.12px;width:360.30px;height:5.80px;background:#c6c7ca"></div>
<div style="left:1859.50px;top:1467.12px;width:130.00px;height:5.80px;background:#c6c7ca"></div>
<div style="left:1997.00px;top:1467.12px;width:125.50px;height:5.80px;background:#c6c7ca"></div>
<div style="left:2191.00px;top:1467.12px;width:79.60px;height:5.80px;background:#c6c7ca"></div>
<div style="left:774.50px;top:1518.86px;width:46.20px;height:5.80px;background:#c6c7ca"></div>
<div style="left:967.50px;top:1518.86px;width:47.00px;height:5.80px;background:#c6c7ca"></div>
<div style="left:1492.50px;top:1518.86px;width:360.30px;height:5.80px;background:#c6c7ca"></div>
<div style="left:1859.50px;top:1518.86px;width:130.00px;height:5.80px;background:#c6c7ca"></div>
<div style="left:1997.00px;top:1518.86px;width:125.50px;height:5.80px;background:#c6c7ca"></div>
<div style="left:2191.00px;top:1518.86px;width:79.60px;height:5.80px;background:#c6c7ca"></div>
<div style="left:774.50px;top:1570.60px;width:46.20px;height:5.80px;background:#c6c7ca"></div>
<div style="left:967.50px;top:1570.60px;width:47.00px;height:5.80px;background:#c6c7ca"></div>
<div style="left:1492.50px;top:1570.60px;width:360.30px;height:5.80px;background:#c6c7ca"></div>
<div style="left:1859.50px;top:1570.60px;width:130.00px;height:5.80px;background:#c6c7ca"></div>
<div style="left:1997.00px;top:1570.60px;width:125.50px;height:5.80px;background:#c6c7ca"></div>
<div style="left:2191.00px;top:1570.60px;width:79.60px;height:5.80px;background:#c6c7ca"></div>
<div class="t" style="left:57.15px;top:552.84px;font-size:27px;line-height:27px;color:#383b3e;transform:scaleX(0.9260);transform-origin:0 0">148</div>
<div class="t" style="left:148.62px;top:552.84px;font-size:27px;line-height:27px;font-weight:400;color:#000;transform:scaleX(0.9881);transform-origin:0 0;">buresstart</div>
<div class="t" style="left:625.06px;top:552.84px;font-size:27px;line-height:27px;font-weight:400;color:#000;transform:scaleX(0.9288);transform-origin:0 0;">K1</div>
<div style="left:773.50px;top:540.80px;width:48.20px;height:47.34px;background:linear-gradient(#fdfdfd,#ececec);border:1.5px solid #b5b5b5;border-radius:5px;box-sizing:border-box"></div>
<div style="left:966.50px;top:540.80px;width:49.00px;height:47.34px;background:linear-gradient(#fdfdfd,#ececec);border:1.5px solid #b5b5b5;border-radius:5px;box-sizing:border-box"></div>
<svg style="position:absolute;left:1036.50px;top:548.90px;width:31px;height:31px;overflow:visible" viewBox="0 0 31 31"><rect x="0.75" y="0.75" width="29.2" height="29.7" fill="none" stroke="#9ba0a4" stroke-width="1.6"/></svg>
<div class="t" style="left:1101.76px;top:552.84px;font-size:27px;line-height:27px;font-weight:400;color:#000;transform:scaleX(0.9049);transform-origin:0 0;">421</div>
<svg style="position:absolute;left:1181.00px;top:548.90px;width:31px;height:31px;overflow:visible" viewBox="0 0 31 31"><rect x="0.75" y="0.75" width="29.2" height="29.7" fill="none" stroke="#9ba0a4" stroke-width="1.6"/></svg>
<svg style="position:absolute;left:1277.50px;top:548.90px;width:31px;height:31px;overflow:visible" viewBox="0 0 31 31"><rect x="0.75" y="0.75" width="29.2" height="29.7" fill="none" stroke="#9ba0a4" stroke-width="1.6"/></svg>
<svg style="position:absolute;left:1405.80px;top:548.90px;width:31px;height:31px;overflow:visible" viewBox="0 0 31 31"><rect x="0.75" y="0.75" width="29.2" height="29.7" fill="none" stroke="#9ba0a4" stroke-width="1.6"/><path d="M6.8 15.2 L13.6 21.1 L26 9.2" fill="none" stroke="#a3a8ac" stroke-width="2.6"/></svg>
<div style="left:1491.50px;top:541.60px;width:362.30px;height:45.94px;background:linear-gradient(#fefefe,#ededed);border:1.5px solid #cdcdcd;border-radius:5px;box-sizing:border-box"></div>
<svg style="position:absolute;left:1821.00px;top:560.90px;width:18px;height:10px;overflow:visible" viewBox="0 0 18 10"><path d="M0.5 0.5 H16.5 L8.5 9 Z" fill="#9c9c9c"/></svg>
<div class="t" style="left:1501.12px;top:552.84px;font-size:27px;line-height:27px;font-weight:400;color:#000;transform:scaleX(0.9896);transform-origin:0 0;">Feld unsichtbar</div>
<div style="left:1858.50px;top:541.60px;width:132.00px;height:45.94px;background:linear-gradient(#fefefe,#ededed);border:1.5px solid #cdcdcd;border-radius:5px;box-sizing:border-box"></div>
<svg style="position:absolute;left:1958.50px;top:560.90px;width:18px;height:10px;overflow:visible" viewBox="0 0 18 10"><path d="M0.5 0.5 H16.5 L8.5 9 Z" fill="#9c9c9c"/></svg>
<div class="t" style="left:1868.90px;top:552.84px;font-size:27px;line-height:27px;font-weight:400;color:#000;transform:scaleX(0.9775);transform-origin:0 0;">A</div>
<div style="left:1996.00px;top:541.60px;width:127.50px;height:45.94px;background:linear-gradient(#fefefe,#ededed);border:1.5px solid #cdcdcd;border-radius:5px;box-sizing:border-box"></div>
<svg style="position:absolute;left:2091.50px;top:560.90px;width:18px;height:10px;overflow:visible" viewBox="0 0 18 10"><path d="M0.5 0.5 H16.5 L8.5 9 Z" fill="#9c9c9c"/></svg>
<div class="t" style="left:2005.40px;top:552.84px;font-size:27px;line-height:27px;font-weight:400;color:#000;transform:scaleX(0.9775);transform-origin:0 0;">A</div>
<svg style="position:absolute;left:2141.50px;top:548.90px;width:31px;height:31px;overflow:visible" viewBox="0 0 31 31"><rect x="0.75" y="0.75" width="29.2" height="29.7" fill="none" stroke="#9ba0a4" stroke-width="1.6"/></svg>
<div style="left:2190.00px;top:540.80px;width:81.60px;height:47.34px;background:linear-gradient(#fdfdfd,#ececec);border:1.5px solid #b5b5b5;border-radius:5px;box-sizing:border-box"></div>
<div class="t" style="left:2286.44px;top:552.84px;font-size:27px;line-height:27px;font-weight:400;color:#000;transform:scaleX(0.9801);transform-origin:0 0;">Beginn Reservefelder für Kopfteil</div>
<div class="t" style="left:57.15px;top:604.58px;font-size:27px;line-height:27px;color:#383b3e;transform:scaleX(0.9260);transform-origin:0 0">149</div>
<div class="t" style="left:148.56px;top:604.58px;font-size:27px;line-height:27px;font-weight:400;color:#000;transform:scaleX(1.0222);transform-origin:0 0;">buydatevb</div>
<div class="t" style="left:625.90px;top:604.58px;font-size:27px;line-height:27px;font-weight:400;color:#000;transform:scaleX(0.9230);transform-origin:0 0;">GL15</div>
<div style="left:773.50px;top:592.54px;width:48.20px;height:47.34px;background:linear-gradient(#fdfdfd,#ececec);border:1.5px solid #b5b5b5;border-radius:5px;box-sizing:border-box"></div>
<div style="left:966.50px;top:592.54px;width:49.00px;height:47.34px;background:linear-gradient(#fdfdfd,#ececec);border:1.5px solid #b5b5b5;border-radius:5px;box-sizing:border-box"></div>
<svg style="position:absolute;left:1036.50px;top:600.64px;width:31px;height:31px;overflow:visible" viewBox="0 0 31 31"><rect x="0.75" y="0.75" width="29.2" height="29.7" fill="none" stroke="#9ba0a4" stroke-width="1.6"/></svg>
<div class="t" style="left:1101.76px;top:604.58px;font-size:27px;line-height:27px;font-weight:400;color:#000;transform:scaleX(0.9049);transform-origin:0 0;">422</div>
<svg style="position:absolute;left:1181.00px;top:600.64px;width:31px;height:31px;overflow:visible" viewBox="0 0 31 31"><rect x="0.75" y="0.75" width="29.2" height="29.7" fill="none" stroke="#9ba0a4" stroke-width="1.6"/></svg>
<svg style="position:absolute;left:1277.50px;top:600.64px;width:31px;height:31px;overflow:visible" viewBox="0 0 31 31"><rect x="0.75" y="0.75" width="29.2" height="29.7" fill="none" stroke="#9ba0a4" stroke-width="1.6"/><path d="M6.8 15.2 L13.6 21.1 L26 9.2" fill="none" stroke="#a3a8ac" stroke-width="2.6"/></svg>
<svg style="position:absolute;left:1405.80px;top:600.64px;width:31px;height:31px;overflow:visible" viewBox="0 0 31 31"><rect x="0.75" y="0.75" width="29.2" height="29.7" fill="none" stroke="#9ba0a4" stroke-width="1.6"/></svg>
<div style="left:1491.50px;top:593.34px;width:362.30px;height:45.94px;background:linear-gradient(#fefefe,#ededed);border:1.5px solid #cdcdcd;border-radius:5px;box-sizing:border-box"></div>
<svg style="position:absolute;left:1821.00px;top:612.64px;width:18px;height:10px;overflow:visible" viewBox="0 0 18 10"><path d="M0.5 0.5 H16.5 L8.5 9 Z" fill="#9c9c9c"/></svg>
<div class="t" style="left:1502.32px;top:604.58px;font-size:27px;line-height:27px;font-weight:400;color:#000;transform:scaleX(0.9822);transform-origin:0 0;">änderbar</div>
<div style="left:1858.50px;top:593.34px;width:132.00px;height:45.94px;background:linear-gradient(#fefefe,#ededed);border:1.5px solid #cdcdcd;border-radius:5px;box-sizing:border-box"></div>
<svg style="position:absolute;left:1958.50px;top:612.64px;width:18px;height:10px;overflow:visible" viewBox="0 0 18 10"><path d="M0.5 0.5 H16.5 L8.5 9 Z" fill="#9c9c9c"/></svg>
<div class="t" style="left:1868.90px;top:604.58px;font-size:27px;line-height:27px;font-weight:400;color:#000;transform:scaleX(0.9775);transform-origin:0 0;">A</div>
<div style="left:1996.00px;top:593.34px;width:127.50px;height:45.94px;background:linear-gradient(#fefefe,#ededed);border:1.5px solid #cdcdcd;border-radius:5px;box-sizing:border-box"></div>
<svg style="position:absolute;left:2091.50px;top:612.64px;width:18px;height:10px;overflow:visible" viewBox="0 0 18 10"><path d="M0.5 0.5 H16.5 L8.5 9 Z" fill="#9c9c9c"/></svg>
<div class="t" style="left:2005.40px;top:604.58px;font-size:27px;line-height:27px;font-weight:400;color:#000;transform:scaleX(0.9775);transform-origin:0 0;">A</div>
<svg style="position:absolute;left:2141.50px;top:600.64px;width:31px;height:31px;overflow:visible" viewBox="0 0 31 31"><rect x="0.75" y="0.75" width="29.2" height="29.7" fill="none" stroke="#9ba0a4" stroke-width="1.6"/></svg>
<div style="left:2190.00px;top:592.54px;width:81.60px;height:47.34px;background:linear-gradient(#fdfdfd,#ececec);border:1.5px solid #b5b5b5;border-radius:5px;box-sizing:border-box"></div>
<div class="t" style="left:2286.14px;top:604.58px;font-size:27px;line-height:27px;font-weight:400;color:#000;transform:scaleX(0.9370);transform-origin:0 0;">DATEV Bearbeiter</div>
<div class="t" style="left:57.15px;top:656.32px;font-size:27px;line-height:27px;color:#383b3e;transform:scaleX(0.9260);transform-origin:0 0">150</div>
<div class="t" style="left:148.55px;top:656.32px;font-size:27px;line-height:27px;font-weight:400;color:#000;transform:scaleX(1.0272);transform-origin:0 0;">buydatevd</div>
<div class="t" style="left:625.89px;top:656.32px;font-size:27px;line-height:27px;font-weight:400;color:#000;transform:scaleX(0.9288);transform-origin:0 0;">GD</div>
<div style="left:773.50px;top:644.28px;width:48.20px;height:47.34px;background:linear-gradient(#fdfdfd,#ececec);border:1.5px solid #b5b5b5;border-radius:5px;box-sizing:border-box"></div>
<div style="left:966.50px;top:644.28px;width:49.00px;height:47.34px;background:linear-gradient(#fdfdfd,#ececec);border:1.5px solid #b5b5b5;border-radius:5px;box-sizing:border-box"></div>
<svg style="position:absolute;left:1036.50px;top:652.38px;width:31px;height:31px;overflow:visible" viewBox="0 0 31 31"><rect x="0.75" y="0.75" width="29.2" height="29.7" fill="none" stroke="#9ba0a4" stroke-width="1.6"/></svg>
<div class="t" style="left:1101.67px;top:656.32px;font-size:27px;line-height:27px;font-weight:400;color:#000;transform:scaleX(0.9049);transform-origin:0 0;">423</div>
<svg style="position:absolute;left:1181.00px;top:652.38px;width:31px;height:31px;overflow:visible" viewBox="0 0 31 31"><rect x="0.75" y="0.75" width="29.2" height="29.7" fill="none" stroke="#9ba0a4" stroke-width="1.6"/></svg>
<svg style="position:absolute;left:1277.50px;top:652.38px;width:31px;height:31px;overflow:visible" viewBox="0 0 31 31"><rect x="0.75" y="0.75" width="29.2" height="29.7" fill="none" stroke="#9ba0a4" stroke-width="1.6"/><path d="M6.8 15.2 L13.6 21.1 L26 9.2" fill="none" stroke="#a3a8ac" stroke-width="2.6"/></svg>
<svg style="position:absolute;left:1405.80px;top:652.38px;width:31px;height:31px;overflow:visible" viewBox="0 0 31 31"><rect x="0.75" y="0.75" width="29.2" height="29.7" fill="none" stroke="#9ba0a4" stroke-width="1.6"/></svg>
<div style="left:1491.50px;top:645.08px;width:362.30px;height:45.94px;background:linear-gradient(#fefefe,#ededed);border:1.5px solid #cdcdcd;border-radius:5px;box-sizing:border-box"></div>
<svg style="position:absolute;left:1821.00px;top:664.38px;width:18px;height:10px;overflow:visible" viewBox="0 0 18 10"><path d="M0.5 0.5 H16.5 L8.5 9 Z" fill="#9c9c9c"/></svg>
<div class="t" style="left:1502.32px;top:656.32px;font-size:27px;line-height:27px;font-weight:400;color:#000;transform:scaleX(0.9822);transform-origin:0 0;">änderbar</div>
<div style="left:1858.50px;top:645.08px;width:132.00px;height:45.94px;background:linear-gradient(#fefefe,#ededed);border:1.5px solid #cdcdcd;border-radius:5px;box-sizing:border-box"></div>
<svg style="position:absolute;left:1958.50px;top:664.38px;width:18px;height:10px;overflow:visible" viewBox="0 0 18 10"><path d="M0.5 0.5 H16.5 L8.5 9 Z" fill="#9c9c9c"/></svg>
<div class="t" style="left:1868.90px;top:656.32px;font-size:27px;line-height:27px;font-weight:400;color:#000;transform:scaleX(0.9775);transform-origin:0 0;">A</div>
<div style="left:1996.00px;top:645.08px;width:127.50px;height:45.94px;background:linear-gradient(#fefefe,#ededed);border:1.5px solid #cdcdcd;border-radius:5px;box-sizing:border-box"></div>
<svg style="position:absolute;left:2091.50px;top:664.38px;width:18px;height:10px;overflow:visible" viewBox="0 0 18 10"><path d="M0.5 0.5 H16.5 L8.5 9 Z" fill="#9c9c9c"/></svg>
<div class="t" style="left:2005.40px;top:656.32px;font-size:27px;line-height:27px;font-weight:400;color:#000;transform:scaleX(0.9775);transform-origin:0 0;">A</div>
<svg style="position:absolute;left:2141.50px;top:652.38px;width:31px;height:31px;overflow:visible" viewBox="0 0 31 31"><rect x="0.75" y="0.75" width="29.2" height="29.7" fill="none" stroke="#9ba0a4" stroke-width="1.6"/></svg>
<div style="left:2190.00px;top:644.28px;width:81.60px;height:47.34px;background:linear-gradient(#fdfdfd,#ececec);border:1.5px solid #b5b5b5;border-radius:5px;box-sizing:border-box"></div>
<div class="t" style="left:2286.08px;top:656.32px;font-size:27px;line-height:27px;font-weight:400;color:#000;transform:scaleX(0.9626);transform-origin:0 0;">DATEV Datum</div>
<div class="t" style="left:57.15px;top:708.06px;font-size:27px;line-height:27px;color:#383b3e;transform:scaleX(0.9260);transform-origin:0 0">151</div>
<div class="t" style="left:148.38px;top:708.06px;font-size:27px;line-height:27px;font-weight:400;color:#000;transform:scaleX(1.0659);transform-origin:0 0;">ittabnr</div>
<div class="t" style="left:626.49px;top:708.06px;font-size:27px;line-height:27px;font-weight:400;color:#000;transform:scaleX(1.0241);transform-origin:0 0;">TZN</div>
<div style="left:773.50px;top:696.02px;width:48.20px;height:47.34px;background:linear-gradient(#fdfdfd,#ececec);border:1.5px solid #b5b5b5;border-radius:5px;box-sizing:border-box"></div>
<div style="left:966.50px;top:696.02px;width:49.00px;height:47.34px;background:linear-gradient(#fdfdfd,#ececec);border:1.5px solid #b5b5b5;border-radius:5px;box-sizing:border-box"></div>
<svg style="position:absolute;left:1036.50px;top:704.12px;width:31px;height:31px;overflow:visible" viewBox="0 0 31 31"><rect x="0.75" y="0.75" width="29.2" height="29.7" fill="none" stroke="#9ba0a4" stroke-width="1.6"/><path d="M6.8 15.2 L13.6 21.1 L26 9.2" fill="none" stroke="#a3a8ac" stroke-width="2.6"/></svg>
<div class="t" style="left:1128.90px;top:708.06px;font-size:27px;line-height:27px;font-weight:400;color:#000;transform:scaleX(0.9049);transform-origin:0 0;">1</div>
<svg style="position:absolute;left:1181.00px;top:704.12px;width:31px;height:31px;overflow:visible" viewBox="0 0 31 31"><rect x="0.75" y="0.75" width="29.2" height="29.7" fill="none" stroke="#9ba0a4" stroke-width="1.6"/></svg>
<svg style="position:absolute;left:1277.50px;top:704.12px;width:31px;height:31px;overflow:visible" viewBox="0 0 31 31"><rect x="0.75" y="0.75" width="29.2" height="29.7" fill="none" stroke="#9ba0a4" stroke-width="1.6"/><path d="M6.8 15.2 L13.6 21.1 L26 9.2" fill="none" stroke="#a3a8ac" stroke-width="2.6"/></svg>
<svg style="position:absolute;left:1405.80px;top:704.12px;width:31px;height:31px;overflow:visible" viewBox="0 0 31 31"><rect x="0.75" y="0.75" width="29.2" height="29.7" fill="none" stroke="#9ba0a4" stroke-width="1.6"/><path d="M6.8 15.2 L13.6 21.1 L26 9.2" fill="none" stroke="#a3a8ac" stroke-width="2.6"/></svg>
<div style="left:1491.50px;top:696.82px;width:362.30px;height:45.94px;background:linear-gradient(#fefefe,#ededed);border:1.5px solid #cdcdcd;border-radius:5px;box-sizing:border-box"></div>
<svg style="position:absolute;left:1821.00px;top:716.12px;width:18px;height:10px;overflow:visible" viewBox="0 0 18 10"><path d="M0.5 0.5 H16.5 L8.5 9 Z" fill="#9c9c9c"/></svg>
<div class="t" style="left:1501.58px;top:708.06px;font-size:27px;line-height:27px;font-weight:400;color:#000;transform:scaleX(1.0138);transform-origin:0 0;">immer geschützt</div>
<div style="left:1858.50px;top:696.82px;width:132.00px;height:45.94px;background:linear-gradient(#fefefe,#ededed);border:1.5px solid #cdcdcd;border-radius:5px;box-sizing:border-box"></div>
<svg style="position:absolute;left:1958.50px;top:716.12px;width:18px;height:10px;overflow:visible" viewBox="0 0 18 10"><path d="M0.5 0.5 H16.5 L8.5 9 Z" fill="#9c9c9c"/></svg>
<div class="t" style="left:1868.90px;top:708.06px;font-size:27px;line-height:27px;font-weight:400;color:#000;transform:scaleX(0.9775);transform-origin:0 0;">A</div>
<div style="left:1996.00px;top:696.82px;width:127.50px;height:45.94px;background:linear-gradient(#fefefe,#ededed);border:1.5px solid #cdcdcd;border-radius:5px;box-sizing:border-box"></div>
<svg style="position:absolute;left:2091.50px;top:716.12px;width:18px;height:10px;overflow:visible" viewBox="0 0 18 10"><path d="M0.5 0.5 H16.5 L8.5 9 Z" fill="#9c9c9c"/></svg>
<div class="t" style="left:2005.40px;top:708.06px;font-size:27px;line-height:27px;font-weight:400;color:#000;transform:scaleX(0.9775);transform-origin:0 0;">A</div>
<svg style="position:absolute;left:2141.50px;top:704.12px;width:31px;height:31px;overflow:visible" viewBox="0 0 31 31"><rect x="0.75" y="0.75" width="29.2" height="29.7" fill="none" stroke="#9ba0a4" stroke-width="1.6"/></svg>
<div style="left:2190.00px;top:696.02px;width:81.60px;height:47.34px;background:linear-gradient(#fdfdfd,#ececec);border:1.5px solid #b5b5b5;border-radius:5px;box-sizing:border-box"></div>
<div class="t" style="left:2286.50px;top:708.06px;font-size:27px;line-height:27px;font-weight:400;color:#000;transform:scaleX(1.0028);transform-origin:0 0;">Zeilen-ID</div>
<div class="t" style="left:57.15px;top:759.80px;font-size:27px;line-height:27px;color:#383b3e;transform:scaleX(0.9260);transform-origin:0 0">152</div>
<div class="t" style="left:148.35px;top:759.80px;font-size:27px;line-height:27px;font-weight:400;color:#000;transform:scaleX(1.0854);transform-origin:0 0;">itzid</div>
<div class="t" style="left:624.70px;top:759.80px;font-size:27px;line-height:27px;font-weight:400;color:#000;transform:scaleX(0.9587);transform-origin:0 0;">IDZ6:0</div>
<div style="left:773.50px;top:747.76px;width:48.20px;height:47.34px;background:linear-gradient(#fdfdfd,#ececec);border:1.5px solid #b5b5b5;border-radius:5px;box-sizing:border-box"></div>
<div style="left:966.50px;top:747.76px;width:49.00px;height:47.34px;background:linear-gradient(#fdfdfd,#ececec);border:1.5px solid #b5b5b5;border-radius:5px;box-sizing:border-box"></div>
<svg style="position:absolute;left:1036.50px;top:755.86px;width:31px;height:31px;overflow:visible" viewBox="0 0 31 31"><rect x="0.75" y="0.75" width="29.2" height="29.7" fill="none" stroke="#9ba0a4" stroke-width="1.6"/><path d="M6.8 15.2 L13.6 21.1 L26 9.2" fill="none" stroke="#a3a8ac" stroke-width="2.6"/></svg>
<div class="t" style="left:1128.90px;top:759.80px;font-size:27px;line-height:27px;font-weight:400;color:#000;transform:scaleX(0.9049);transform-origin:0 0;">2</div>
<svg style="position:absolute;left:1181.00px;top:755.86px;width:31px;height:31px;overflow:visible" viewBox="0 0 31 31"><rect x="0.75" y="0.75" width="29.2" height="29.7" fill="none" stroke="#9ba0a4" stroke-width="1.6"/><path d="M6.8 15.2 L13.6 21.1 L26 9.2" fill="none" stroke="#a3a8ac" stroke-width="2.6"/></svg>
<svg style="position:absolute;left:1277.50px;top:755.86px;width:31px;height:31px;overflow:visible" viewBox="0 0 31 31"><rect x="0.75" y="0.75" width="29.2" height="29.7" fill="none" stroke="#9ba0a4" stroke-width="1.6"/><path d="M6.8 15.2 L13.6 21.1 L26 9.2" fill="none" stroke="#a3a8ac" stroke-width="2.6"/></svg>
<svg style="position:absolute;left:1405.80px;top:755.86px;width:31px;height:31px;overflow:visible" viewBox="0 0 31 31"><rect x="0.75" y="0.75" width="29.2" height="29.7" fill="none" stroke="#9ba0a4" stroke-width="1.6"/><path d="M6.8 15.2 L13.6 21.1 L26 9.2" fill="none" stroke="#a3a8ac" stroke-width="2.6"/></svg>
<div style="left:1491.50px;top:748.56px;width:362.30px;height:45.94px;background:linear-gradient(#fefefe,#ededed);border:1.5px solid #cdcdcd;border-radius:5px;box-sizing:border-box"></div>
<svg style="position:absolute;left:1821.00px;top:767.86px;width:18px;height:10px;overflow:visible" viewBox="0 0 18 10"><path d="M0.5 0.5 H16.5 L8.5 9 Z" fill="#9c9c9c"/></svg>
<div class="t" style="left:1501.58px;top:759.80px;font-size:27px;line-height:27px;font-weight:400;color:#000;transform:scaleX(1.0138);transform-origin:0 0;">immer geschützt</div>
<div style="left:1858.50px;top:748.56px;width:132.00px;height:45.94px;background:linear-gradient(#fefefe,#ededed);border:1.5px solid #cdcdcd;border-radius:5px;box-sizing:border-box"></div>
<svg style="position:absolute;left:1958.50px;top:767.86px;width:18px;height:10px;overflow:visible" viewBox="0 0 18 10"><path d="M0.5 0.5 H16.5 L8.5 9 Z" fill="#9c9c9c"/></svg>
<div class="t" style="left:1868.90px;top:759.80px;font-size:27px;line-height:27px;font-weight:400;color:#000;transform:scaleX(0.9775);transform-origin:0 0;">A</div>
<div style="left:1996.00px;top:748.56px;width:127.50px;height:45.94px;background:linear-gradient(#fefefe,#ededed);border:1.5px solid #cdcdcd;border-radius:5px;box-sizing:border-box"></div>
<svg style="position:absolute;left:2091.50px;top:767.86px;width:18px;height:10px;overflow:visible" viewBox="0 0 18 10"><path d="M0.5 0.5 H16.5 L8.5 9 Z" fill="#9c9c9c"/></svg>
<div class="t" style="left:2005.40px;top:759.80px;font-size:27px;line-height:27px;font-weight:400;color:#000;transform:scaleX(0.9775);transform-origin:0 0;">A</div>
<svg style="position:absolute;left:2141.50px;top:755.86px;width:31px;height:31px;overflow:visible" viewBox="0 0 31 31"><rect x="0.75" y="0.75" width="29.2" height="29.7" fill="none" stroke="#9ba0a4" stroke-width="1.6"/></svg>
<div style="left:2190.00px;top:747.76px;width:81.60px;height:47.34px;background:linear-gradient(#fdfdfd,#ececec);border:1.5px solid #b5b5b5;border-radius:5px;box-sizing:border-box"></div>
<div class="t" style="left:2286.50px;top:759.80px;font-size:27px;line-height:27px;font-weight:400;color:#000;transform:scaleX(1.0028);transform-origin:0 0;">Zeilen-ID</div>
<div class="t" style="left:57.15px;top:811.54px;font-size:27px;line-height:27px;color:#383b3e;transform:scaleX(0.9260);transform-origin:0 0">153</div>
<div class="t" style="left:148.41px;top:811.54px;font-size:27px;line-height:27px;font-weight:400;color:#000;transform:scaleX(1.0519);transform-origin:0 0;">itzn</div>
<div class="t" style="left:624.51px;top:811.54px;font-size:27px;line-height:27px;font-weight:400;color:#000;transform:scaleX(1.0370);transform-origin:0 0;">I5</div>
<div style="left:773.50px;top:799.50px;width:48.20px;height:47.34px;background:linear-gradient(#fdfdfd,#ececec);border:1.5px solid #b5b5b5;border-radius:5px;box-sizing:border-box"></div>
<div style="left:966.50px;top:799.50px;width:49.00px;height:47.34px;background:linear-gradient(#fdfdfd,#ececec);border:1.5px solid #b5b5b5;border-radius:5px;box-sizing:border-box"></div>
<svg style="position:absolute;left:1036.50px;top:807.60px;width:31px;height:31px;overflow:visible" viewBox="0 0 31 31"><rect x="0.75" y="0.75" width="29.2" height="29.7" fill="none" stroke="#9ba0a4" stroke-width="1.6"/><path d="M6.8 15.2 L13.6 21.1 L26 9.2" fill="none" stroke="#a3a8ac" stroke-width="2.6"/></svg>
<div class="t" style="left:1128.72px;top:811.54px;font-size:27px;line-height:27px;font-weight:400;color:#000;transform:scaleX(0.9049);transform-origin:0 0;">8</div>
<svg style="position:absolute;left:1181.00px;top:807.60px;width:31px;height:31px;overflow:visible" viewBox="0 0 31 31"><rect x="0.75" y="0.75" width="29.2" height="29.7" fill="none" stroke="#9ba0a4" stroke-width="1.6"/><path d="M6.8 15.2 L13.6 21.1 L26 9.2" fill="none" stroke="#a3a8ac" stroke-width="2.6"/></svg>
<svg style="position:absolute;left:1277.50px;top:807.60px;width:31px;height:31px;overflow:visible" viewBox="0 0 31 31"><rect x="0.75" y="0.75" width="29.2" height="29.7" fill="none" stroke="#9ba0a4" stroke-width="1.6"/><path d="M6.8 15.2 L13.6 21.1 L26 9.2" fill="none" stroke="#a3a8ac" stroke-width="2.6"/></svg>
<svg style="position:absolute;left:1405.80px;top:807.60px;width:31px;height:31px;overflow:visible" viewBox="0 0 31 31"><rect x="0.75" y="0.75" width="29.2" height="29.7" fill="none" stroke="#9ba0a4" stroke-width="1.6"/><path d="M6.8 15.2 L13.6 21.1 L26 9.2" fill="none" stroke="#a3a8ac" stroke-width="2.6"/></svg>
<div style="left:1491.50px;top:800.30px;width:362.30px;height:45.94px;background:linear-gradient(#fefefe,#ededed);border:1.5px solid #cdcdcd;border-radius:5px;box-sizing:border-box"></div>
<svg style="position:absolute;left:1821.00px;top:819.60px;width:18px;height:10px;overflow:visible" viewBox="0 0 18 10"><path d="M0.5 0.5 H16.5 L8.5 9 Z" fill="#9c9c9c"/></svg>
<div class="t" style="left:1501.58px;top:811.54px;font-size:27px;line-height:27px;font-weight:400;color:#000;transform:scaleX(1.0138);transform-origin:0 0;">immer geschützt</div>
<div style="left:1858.50px;top:800.30px;width:132.00px;height:45.94px;background:linear-gradient(#fefefe,#ededed);border:1.5px solid #cdcdcd;border-radius:5px;box-sizing:border-box"></div>
<svg style="position:absolute;left:1958.50px;top:819.60px;width:18px;height:10px;overflow:visible" viewBox="0 0 18 10"><path d="M0.5 0.5 H16.5 L8.5 9 Z" fill="#9c9c9c"/></svg>
<div class="t" style="left:1868.90px;top:811.54px;font-size:27px;line-height:27px;font-weight:400;color:#000;transform:scaleX(0.9775);transform-origin:0 0;">A</div>
<div style="left:1996.00px;top:800.30px;width:127.50px;height:45.94px;background:linear-gradient(#fefefe,#ededed);border:1.5px solid #cdcdcd;border-radius:5px;box-sizing:border-box"></div>
<svg style="position:absolute;left:2091.50px;top:819.60px;width:18px;height:10px;overflow:visible" viewBox="0 0 18 10"><path d="M0.5 0.5 H16.5 L8.5 9 Z" fill="#9c9c9c"/></svg>
<div class="t" style="left:2005.40px;top:811.54px;font-size:27px;line-height:27px;font-weight:400;color:#000;transform:scaleX(0.9775);transform-origin:0 0;">A</div>
<svg style="position:absolute;left:2141.50px;top:807.60px;width:31px;height:31px;overflow:visible" viewBox="0 0 31 31"><rect x="0.75" y="0.75" width="29.2" height="29.7" fill="none" stroke="#9ba0a4" stroke-width="1.6"/></svg>
<div style="left:2190.00px;top:799.50px;width:81.60px;height:47.34px;background:linear-gradient(#fdfdfd,#ececec);border:1.5px solid #b5b5b5;border-radius:5px;box-sizing:border-box"></div>
<div class="t" style="left:2285.79px;top:811.54px;font-size:27px;line-height:27px;font-weight:400;color:#000;transform:scaleX(1.0038);transform-origin:0 0;">Laufende Zeilennummer</div>
<div class="t" style="left:57.15px;top:863.28px;font-size:27px;line-height:27px;color:#383b3e;transform:scaleX(0.9260);transform-origin:0 0">154</div>
<div class="t" style="left:148.38px;top:863.28px;font-size:27px;line-height:27px;font-weight:400;color:#000;transform:scaleX(1.0640);transform-origin:0 0;">itbudruck</div>
<div class="t" style="left:625.03px;top:863.28px;font-size:27px;line-height:27px;font-weight:400;color:#000;transform:scaleX(0.9395);transform-origin:0 0;">BU14</div>
<div style="left:773.50px;top:851.24px;width:48.20px;height:47.34px;background:linear-gradient(#fdfdfd,#ececec);border:1.5px solid #b5b5b5;border-radius:5px;box-sizing:border-box"></div>
<div style="left:966.50px;top:851.24px;width:49.00px;height:47.34px;background:linear-gradient(#fdfdfd,#ececec);border:1.5px solid #b5b5b5;border-radius:5px;box-sizing:border-box"></div>
<svg style="position:absolute;left:1036.50px;top:859.34px;width:31px;height:31px;overflow:visible" viewBox="0 0 31 31"><rect x="0.75" y="0.75" width="29.2" height="29.7" fill="none" stroke="#9ba0a4" stroke-width="1.6"/><path d="M6.8 15.2 L13.6 21.1 L26 9.2" fill="none" stroke="#a3a8ac" stroke-width="2.6"/></svg>
<div class="t" style="left:1117.14px;top:863.28px;font-size:27px;line-height:27px;font-weight:400;color:#000;transform:scaleX(0.9049);transform-origin:0 0;">11</div>
<svg style="position:absolute;left:1181.00px;top:859.34px;width:31px;height:31px;overflow:visible" viewBox="0 0 31 31"><rect x="0.75" y="0.75" width="29.2" height="29.7" fill="none" stroke="#9ba0a4" stroke-width="1.6"/><path d="M6.8 15.2 L13.6 21.1 L26 9.2" fill="none" stroke="#a3a8ac" stroke-width="2.6"/></svg>
<svg style="position:absolute;left:1277.50px;top:859.34px;width:31px;height:31px;overflow:visible" viewBox="0 0 31 31"><rect x="0.75" y="0.75" width="29.2" height="29.7" fill="none" stroke="#9ba0a4" stroke-width="1.6"/></svg>
<svg style="position:absolute;left:1405.80px;top:859.34px;width:31px;height:31px;overflow:visible" viewBox="0 0 31 31"><rect x="0.75" y="0.75" width="29.2" height="29.7" fill="none" stroke="#9ba0a4" stroke-width="1.6"/><path d="M6.8 15.2 L13.6 21.1 L26 9.2" fill="none" stroke="#a3a8ac" stroke-width="2.6"/></svg>
<div style="left:1491.50px;top:852.04px;width:362.30px;height:45.94px;background:linear-gradient(#fefefe,#ededed);border:1.5px solid #cdcdcd;border-radius:5px;box-sizing:border-box"></div>
<svg style="position:absolute;left:1821.00px;top:871.34px;width:18px;height:10px;overflow:visible" viewBox="0 0 18 10"><path d="M0.5 0.5 H16.5 L8.5 9 Z" fill="#9c9c9c"/></svg>
<div class="t" style="left:1500.82px;top:863.28px;font-size:27px;line-height:27px;font-weight:400;color:#000;transform:scaleX(0.9778);transform-origin:0 0;">zeigen änderbar</div>
<div style="left:1858.50px;top:852.04px;width:132.00px;height:45.94px;background:linear-gradient(#fefefe,#ededed);border:1.5px solid #cdcdcd;border-radius:5px;box-sizing:border-box"></div>
<svg style="position:absolute;left:1958.50px;top:871.34px;width:18px;height:10px;overflow:visible" viewBox="0 0 18 10"><path d="M0.5 0.5 H16.5 L8.5 9 Z" fill="#9c9c9c"/></svg>
<div class="t" style="left:1868.90px;top:863.28px;font-size:27px;line-height:27px;font-weight:400;color:#000;transform:scaleX(0.9775);transform-origin:0 0;">A</div>
<div style="left:1996.00px;top:852.04px;width:127.50px;height:45.94px;background:linear-gradient(#fefefe,#ededed);border:1.5px solid #cdcdcd;border-radius:5px;box-sizing:border-box"></div>
<svg style="position:absolute;left:2091.50px;top:871.34px;width:18px;height:10px;overflow:visible" viewBox="0 0 18 10"><path d="M0.5 0.5 H16.5 L8.5 9 Z" fill="#9c9c9c"/></svg>
<div class="t" style="left:2005.40px;top:863.28px;font-size:27px;line-height:27px;font-weight:400;color:#000;transform:scaleX(0.9775);transform-origin:0 0;">A</div>
<svg style="position:absolute;left:2141.50px;top:859.34px;width:31px;height:31px;overflow:visible" viewBox="0 0 31 31"><rect x="0.75" y="0.75" width="29.2" height="29.7" fill="none" stroke="#9ba0a4" stroke-width="1.6"/></svg>
<div style="left:2190.00px;top:851.24px;width:81.60px;height:47.34px;background:linear-gradient(#fdfdfd,#ececec);border:1.5px solid #b5b5b5;border-radius:5px;box-sizing:border-box"></div>
<div class="t" style="left:2285.79px;top:863.28px;font-size:27px;line-height:27px;font-weight:400;color:#000;transform:scaleX(1.0041);transform-origin:0 0;">Drucken</div>
<div class="t" style="left:57.15px;top:915.02px;font-size:27px;line-height:27px;color:#383b3e;transform:scaleX(0.9260);transform-origin:0 0">155</div>
<div class="t" style="left:148.42px;top:915.02px;font-size:27px;line-height:27px;font-weight:400;color:#000;transform:scaleX(1.0469);transform-origin:0 0;">itbudruck2</div>
<div class="t" style="left:625.00px;top:915.02px;font-size:27px;line-height:27px;font-weight:400;color:#000;transform:scaleX(0.9533);transform-origin:0 0;">BU8</div>
<div style="left:773.50px;top:902.98px;width:48.20px;height:47.34px;background:linear-gradient(#fdfdfd,#ececec);border:1.5px solid #b5b5b5;border-radius:5px;box-sizing:border-box"></div>
<div style="left:966.50px;top:902.98px;width:49.00px;height:47.34px;background:linear-gradient(#fdfdfd,#ececec);border:1.5px solid #b5b5b5;border-radius:5px;box-sizing:border-box"></div>
<svg style="position:absolute;left:1036.50px;top:911.08px;width:31px;height:31px;overflow:visible" viewBox="0 0 31 31"><rect x="0.75" y="0.75" width="29.2" height="29.7" fill="none" stroke="#9ba0a4" stroke-width="1.6"/><path d="M6.8 15.2 L13.6 21.1 L26 9.2" fill="none" stroke="#a3a8ac" stroke-width="2.6"/></svg>
<div class="t" style="left:1115.33px;top:915.02px;font-size:27px;line-height:27px;font-weight:400;color:#000;transform:scaleX(0.9049);transform-origin:0 0;">12</div>
<svg style="position:absolute;left:1181.00px;top:911.08px;width:31px;height:31px;overflow:visible" viewBox="0 0 31 31"><rect x="0.75" y="0.75" width="29.2" height="29.7" fill="none" stroke="#9ba0a4" stroke-width="1.6"/><path d="M6.8 15.2 L13.6 21.1 L26 9.2" fill="none" stroke="#a3a8ac" stroke-width="2.6"/></svg>
<svg style="position:absolute;left:1277.50px;top:911.08px;width:31px;height:31px;overflow:visible" viewBox="0 0 31 31"><rect x="0.75" y="0.75" width="29.2" height="29.7" fill="none" stroke="#9ba0a4" stroke-width="1.6"/></svg>
<svg style="position:absolute;left:1405.80px;top:911.08px;width:31px;height:31px;overflow:visible" viewBox="0 0 31 31"><rect x="0.75" y="0.75" width="29.2" height="29.7" fill="none" stroke="#9ba0a4" stroke-width="1.6"/><path d="M6.8 15.2 L13.6 21.1 L26 9.2" fill="none" stroke="#a3a8ac" stroke-width="2.6"/></svg>
<div style="left:1491.50px;top:903.78px;width:362.30px;height:45.94px;background:linear-gradient(#fefefe,#ededed);border:1.5px solid #cdcdcd;border-radius:5px;box-sizing:border-box"></div>
<svg style="position:absolute;left:1821.00px;top:923.08px;width:18px;height:10px;overflow:visible" viewBox="0 0 18 10"><path d="M0.5 0.5 H16.5 L8.5 9 Z" fill="#9c9c9c"/></svg>
<div class="t" style="left:1500.82px;top:915.02px;font-size:27px;line-height:27px;font-weight:400;color:#000;transform:scaleX(0.9778);transform-origin:0 0;">zeigen änderbar</div>
<div style="left:1858.50px;top:903.78px;width:132.00px;height:45.94px;background:linear-gradient(#fefefe,#ededed);border:1.5px solid #cdcdcd;border-radius:5px;box-sizing:border-box"></div>
<svg style="position:absolute;left:1958.50px;top:923.08px;width:18px;height:10px;overflow:visible" viewBox="0 0 18 10"><path d="M0.5 0.5 H16.5 L8.5 9 Z" fill="#9c9c9c"/></svg>
<div class="t" style="left:1868.90px;top:915.02px;font-size:27px;line-height:27px;font-weight:400;color:#000;transform:scaleX(0.9775);transform-origin:0 0;">A</div>
<div style="left:1996.00px;top:903.78px;width:127.50px;height:45.94px;background:linear-gradient(#fefefe,#ededed);border:1.5px solid #cdcdcd;border-radius:5px;box-sizing:border-box"></div>
<svg style="position:absolute;left:2091.50px;top:923.08px;width:18px;height:10px;overflow:visible" viewBox="0 0 18 10"><path d="M0.5 0.5 H16.5 L8.5 9 Z" fill="#9c9c9c"/></svg>
<div class="t" style="left:2005.40px;top:915.02px;font-size:27px;line-height:27px;font-weight:400;color:#000;transform:scaleX(0.9775);transform-origin:0 0;">A</div>
<svg style="position:absolute;left:2141.50px;top:911.08px;width:31px;height:31px;overflow:visible" viewBox="0 0 31 31"><rect x="0.75" y="0.75" width="29.2" height="29.7" fill="none" stroke="#9ba0a4" stroke-width="1.6"/></svg>
<div style="left:2190.00px;top:902.98px;width:81.60px;height:47.34px;background:linear-gradient(#fdfdfd,#ececec);border:1.5px solid #b5b5b5;border-radius:5px;box-sizing:border-box"></div>
<div class="t" style="left:2285.79px;top:915.02px;font-size:27px;line-height:27px;font-weight:400;color:#000;transform:scaleX(1.0041);transform-origin:0 0;">Drucken</div>
<div class="t" style="left:57.15px;top:966.76px;font-size:27px;line-height:27px;color:#383b3e;transform:scaleX(0.9260);transform-origin:0 0">156</div>
<div class="t" style="left:148.43px;top:966.76px;font-size:27px;line-height:27px;font-weight:400;color:#000;transform:scaleX(1.0377);transform-origin:0 0;">itbuinfosys</div>
<div class="t" style="left:625.03px;top:966.76px;font-size:27px;line-height:27px;font-weight:400;color:#000;transform:scaleX(0.9395);transform-origin:0 0;">BU14</div>
<div style="left:773.50px;top:954.72px;width:48.20px;height:47.34px;background:linear-gradient(#fdfdfd,#ececec);border:1.5px solid #b5b5b5;border-radius:5px;box-sizing:border-box"></div>
<div style="left:966.50px;top:954.72px;width:49.00px;height:47.34px;background:linear-gradient(#fdfdfd,#ececec);border:1.5px solid #b5b5b5;border-radius:5px;box-sizing:border-box"></div>
<svg style="position:absolute;left:1036.50px;top:962.82px;width:31px;height:31px;overflow:visible" viewBox="0 0 31 31"><rect x="0.75" y="0.75" width="29.2" height="29.7" fill="none" stroke="#9ba0a4" stroke-width="1.6"/><path d="M6.8 15.2 L13.6 21.1 L26 9.2" fill="none" stroke="#a3a8ac" stroke-width="2.6"/></svg>
<div class="t" style="left:1115.24px;top:966.76px;font-size:27px;line-height:27px;font-weight:400;color:#000;transform:scaleX(0.9049);transform-origin:0 0;">13</div>
<svg style="position:absolute;left:1181.00px;top:962.82px;width:31px;height:31px;overflow:visible" viewBox="0 0 31 31"><rect x="0.75" y="0.75" width="29.2" height="29.7" fill="none" stroke="#9ba0a4" stroke-width="1.6"/><path d="M6.8 15.2 L13.6 21.1 L26 9.2" fill="none" stroke="#a3a8ac" stroke-width="2.6"/></svg>
<svg style="position:absolute;left:1277.50px;top:962.82px;width:31px;height:31px;overflow:visible" viewBox="0 0 31 31"><rect x="0.75" y="0.75" width="29.2" height="29.7" fill="none" stroke="#9ba0a4" stroke-width="1.6"/></svg>
<svg style="position:absolute;left:1405.80px;top:962.82px;width:31px;height:31px;overflow:visible" viewBox="0 0 31 31"><rect x="0.75" y="0.75" width="29.2" height="29.7" fill="none" stroke="#9ba0a4" stroke-width="1.6"/><path d="M6.8 15.2 L13.6 21.1 L26 9.2" fill="none" stroke="#a3a8ac" stroke-width="2.6"/></svg>
<div style="left:1491.50px;top:955.52px;width:362.30px;height:45.94px;background:linear-gradient(#fefefe,#ededed);border:1.5px solid #cdcdcd;border-radius:5px;box-sizing:border-box"></div>
<svg style="position:absolute;left:1821.00px;top:974.82px;width:18px;height:10px;overflow:visible" viewBox="0 0 18 10"><path d="M0.5 0.5 H16.5 L8.5 9 Z" fill="#9c9c9c"/></svg>
<div class="t" style="left:1500.82px;top:966.76px;font-size:27px;line-height:27px;font-weight:400;color:#000;transform:scaleX(0.9778);transform-origin:0 0;">zeigen änderbar</div>
<div style="left:1858.50px;top:955.52px;width:132.00px;height:45.94px;background:linear-gradient(#fefefe,#ededed);border:1.5px solid #cdcdcd;border-radius:5px;box-sizing:border-box"></div>
<svg style="position:absolute;left:1958.50px;top:974.82px;width:18px;height:10px;overflow:visible" viewBox="0 0 18 10"><path d="M0.5 0.5 H16.5 L8.5 9 Z" fill="#9c9c9c"/></svg>
<div class="t" style="left:1868.90px;top:966.76px;font-size:27px;line-height:27px;font-weight:400;color:#000;transform:scaleX(0.9775);transform-origin:0 0;">A</div>
<div style="left:1996.00px;top:955.52px;width:127.50px;height:45.94px;background:linear-gradient(#fefefe,#ededed);border:1.5px solid #cdcdcd;border-radius:5px;box-sizing:border-box"></div>
<svg style="position:absolute;left:2091.50px;top:974.82px;width:18px;height:10px;overflow:visible" viewBox="0 0 18 10"><path d="M0.5 0.5 H16.5 L8.5 9 Z" fill="#9c9c9c"/></svg>
<div class="t" style="left:2005.40px;top:966.76px;font-size:27px;line-height:27px;font-weight:400;color:#000;transform:scaleX(0.9775);transform-origin:0 0;">A</div>
<svg style="position:absolute;left:2141.50px;top:962.82px;width:31px;height:31px;overflow:visible" viewBox="0 0 31 31"><rect x="0.75" y="0.75" width="29.2" height="29.7" fill="none" stroke="#9ba0a4" stroke-width="1.6"/></svg>
<div style="left:2190.00px;top:954.72px;width:81.60px;height:47.34px;background:linear-gradient(#fdfdfd,#ececec);border:1.5px solid #b5b5b5;border-radius:5px;box-sizing:border-box"></div>
<div class="t" style="left:2285.45px;top:966.76px;font-size:27px;line-height:27px;font-weight:400;color:#000;transform:scaleX(1.0206);transform-origin:0 0;">Infosystem</div>
<div class="t" style="left:57.15px;top:1018.50px;font-size:27px;line-height:27px;color:#383b3e;transform:scaleX(0.9260);transform-origin:0 0">157</div>
<div class="t" style="left:148.38px;top:1018.50px;font-size:27px;line-height:27px;font-weight:400;color:#000;transform:scaleX(1.0678);transform-origin:0 0;">itbuaktion</div>
<div class="t" style="left:625.03px;top:1018.50px;font-size:27px;line-height:27px;font-weight:400;color:#000;transform:scaleX(0.9395);transform-origin:0 0;">BU14</div>
<div style="left:773.50px;top:1006.46px;width:48.20px;height:47.34px;background:linear-gradient(#fdfdfd,#ececec);border:1.5px solid #b5b5b5;border-radius:5px;box-sizing:border-box"></div>
<div style="left:966.50px;top:1006.46px;width:49.00px;height:47.34px;background:linear-gradient(#fdfdfd,#ececec);border:1.5px solid #b5b5b5;border-radius:5px;box-sizing:border-box"></div>
<svg style="position:absolute;left:1036.50px;top:1014.56px;width:31px;height:31px;overflow:visible" viewBox="0 0 31 31"><rect x="0.75" y="0.75" width="29.2" height="29.7" fill="none" stroke="#9ba0a4" stroke-width="1.6"/><path d="M6.8 15.2 L13.6 21.1 L26 9.2" fill="none" stroke="#a3a8ac" stroke-width="2.6"/></svg>
<div class="t" style="left:1114.88px;top:1018.50px;font-size:27px;line-height:27px;font-weight:400;color:#000;transform:scaleX(0.9049);transform-origin:0 0;">14</div>
<svg style="position:absolute;left:1181.00px;top:1014.56px;width:31px;height:31px;overflow:visible" viewBox="0 0 31 31"><rect x="0.75" y="0.75" width="29.2" height="29.7" fill="none" stroke="#9ba0a4" stroke-width="1.6"/><path d="M6.8 15.2 L13.6 21.1 L26 9.2" fill="none" stroke="#a3a8ac" stroke-width="2.6"/></svg>
<svg style="position:absolute;left:1277.50px;top:1014.56px;width:31px;height:31px;overflow:visible" viewBox="0 0 31 31"><rect x="0.75" y="0.75" width="29.2" height="29.7" fill="none" stroke="#9ba0a4" stroke-width="1.6"/></svg>
<svg style="position:absolute;left:1405.80px;top:1014.56px;width:31px;height:31px;overflow:visible" viewBox="0 0 31 31"><rect x="0.75" y="0.75" width="29.2" height="29.7" fill="none" stroke="#9ba0a4" stroke-width="1.6"/><path d="M6.8 15.2 L13.6 21.1 L26 9.2" fill="none" stroke="#a3a8ac" stroke-width="2.6"/></svg>
<div style="left:1491.50px;top:1007.26px;width:362.30px;height:45.94px;background:linear-gradient(#fefefe,#ededed);border:1.5px solid #cdcdcd;border-radius:5px;box-sizing:border-box"></div>
<svg style="position:absolute;left:1821.00px;top:1026.56px;width:18px;height:10px;overflow:visible" viewBox="0 0 18 10"><path d="M0.5 0.5 H16.5 L8.5 9 Z" fill="#9c9c9c"/></svg>
<div class="t" style="left:1500.82px;top:1018.50px;font-size:27px;line-height:27px;font-weight:400;color:#000;transform:scaleX(0.9778);transform-origin:0 0;">zeigen änderbar</div>
<div style="left:1858.50px;top:1007.26px;width:132.00px;height:45.94px;background:linear-gradient(#fefefe,#ededed);border:1.5px solid #cdcdcd;border-radius:5px;box-sizing:border-box"></div>
<svg style="position:absolute;left:1958.50px;top:1026.56px;width:18px;height:10px;overflow:visible" viewBox="0 0 18 10"><path d="M0.5 0.5 H16.5 L8.5 9 Z" fill="#9c9c9c"/></svg>
<div class="t" style="left:1868.90px;top:1018.50px;font-size:27px;line-height:27px;font-weight:400;color:#000;transform:scaleX(0.9775);transform-origin:0 0;">A</div>
<div style="left:1996.00px;top:1007.26px;width:127.50px;height:45.94px;background:linear-gradient(#fefefe,#ededed);border:1.5px solid #cdcdcd;border-radius:5px;box-sizing:border-box"></div>
<svg style="position:absolute;left:2091.50px;top:1026.56px;width:18px;height:10px;overflow:visible" viewBox="0 0 18 10"><path d="M0.5 0.5 H16.5 L8.5 9 Z" fill="#9c9c9c"/></svg>
<div class="t" style="left:2005.40px;top:1018.50px;font-size:27px;line-height:27px;font-weight:400;color:#000;transform:scaleX(0.9775);transform-origin:0 0;">A</div>
<svg style="position:absolute;left:2141.50px;top:1014.56px;width:31px;height:31px;overflow:visible" viewBox="0 0 31 31"><rect x="0.75" y="0.75" width="29.2" height="29.7" fill="none" stroke="#9ba0a4" stroke-width="1.6"/></svg>
<div style="left:2190.00px;top:1006.46px;width:81.60px;height:47.34px;background:linear-gradient(#fdfdfd,#ececec);border:1.5px solid #b5b5b5;border-radius:5px;box-sizing:border-box"></div>
<div class="t" style="left:2287.90px;top:1018.50px;font-size:27px;line-height:27px;font-weight:400;color:#000;transform:scaleX(0.9947);transform-origin:0 0;">Aktion auslösen</div>
<div class="t" style="left:57.15px;top:1070.24px;font-size:27px;line-height:27px;color:#383b3e;transform:scaleX(0.9260);transform-origin:0 0">158</div>
<div class="t" style="left:148.42px;top:1070.24px;font-size:27px;line-height:27px;font-weight:400;color:#000;transform:scaleX(1.0450);transform-origin:0 0;">itmarkiert</div>
<div class="t" style="left:624.70px;top:1070.24px;font-size:27px;line-height:27px;font-weight:400;color:#000;transform:scaleX(1.0903);transform-origin:0 0;">B</div>
<div style="left:773.50px;top:1058.20px;width:48.20px;height:47.34px;background:linear-gradient(#fdfdfd,#ececec);border:1.5px solid #b5b5b5;border-radius:5px;box-sizing:border-box"></div>
<div style="left:966.50px;top:1058.20px;width:49.00px;height:47.34px;background:linear-gradient(#fdfdfd,#ececec);border:1.5px solid #b5b5b5;border-radius:5px;box-sizing:border-box"></div>
<svg style="position:absolute;left:1036.50px;top:1066.30px;width:31px;height:31px;overflow:visible" viewBox="0 0 31 31"><rect x="0.75" y="0.75" width="29.2" height="29.7" fill="none" stroke="#9ba0a4" stroke-width="1.6"/><path d="M6.8 15.2 L13.6 21.1 L26 9.2" fill="none" stroke="#a3a8ac" stroke-width="2.6"/></svg>
<div class="t" style="left:1115.06px;top:1070.24px;font-size:27px;line-height:27px;font-weight:400;color:#000;transform:scaleX(0.9049);transform-origin:0 0;">20</div>
<svg style="position:absolute;left:1181.00px;top:1066.30px;width:31px;height:31px;overflow:visible" viewBox="0 0 31 31"><rect x="0.75" y="0.75" width="29.2" height="29.7" fill="none" stroke="#9ba0a4" stroke-width="1.6"/><path d="M6.8 15.2 L13.6 21.1 L26 9.2" fill="none" stroke="#a3a8ac" stroke-width="2.6"/></svg>
<svg style="position:absolute;left:1277.50px;top:1066.30px;width:31px;height:31px;overflow:visible" viewBox="0 0 31 31"><rect x="0.75" y="0.75" width="29.2" height="29.7" fill="none" stroke="#9ba0a4" stroke-width="1.6"/><path d="M6.8 15.2 L13.6 21.1 L26 9.2" fill="none" stroke="#a3a8ac" stroke-width="2.6"/></svg>
<svg style="position:absolute;left:1405.80px;top:1066.30px;width:31px;height:31px;overflow:visible" viewBox="0 0 31 31"><rect x="0.75" y="0.75" width="29.2" height="29.7" fill="none" stroke="#9ba0a4" stroke-width="1.6"/></svg>
<div style="left:1491.50px;top:1059.00px;width:362.30px;height:45.94px;background:linear-gradient(#fefefe,#ededed);border:1.5px solid #cdcdcd;border-radius:5px;box-sizing:border-box"></div>
<svg style="position:absolute;left:1821.00px;top:1078.30px;width:18px;height:10px;overflow:visible" viewBox="0 0 18 10"><path d="M0.5 0.5 H16.5 L8.5 9 Z" fill="#9c9c9c"/></svg>
<div class="t" style="left:1502.32px;top:1070.24px;font-size:27px;line-height:27px;font-weight:400;color:#000;transform:scaleX(0.9822);transform-origin:0 0;">änderbar</div>
<div style="left:1858.50px;top:1059.00px;width:132.00px;height:45.94px;background:linear-gradient(#fefefe,#ededed);border:1.5px solid #cdcdcd;border-radius:5px;box-sizing:border-box"></div>
<svg style="position:absolute;left:1958.50px;top:1078.30px;width:18px;height:10px;overflow:visible" viewBox="0 0 18 10"><path d="M0.5 0.5 H16.5 L8.5 9 Z" fill="#9c9c9c"/></svg>
<div class="t" style="left:1868.90px;top:1070.24px;font-size:27px;line-height:27px;font-weight:400;color:#000;transform:scaleX(0.9775);transform-origin:0 0;">A</div>
<div style="left:1996.00px;top:1059.00px;width:127.50px;height:45.94px;background:linear-gradient(#fefefe,#ededed);border:1.5px solid #cdcdcd;border-radius:5px;box-sizing:border-box"></div>
<svg style="position:absolute;left:2091.50px;top:1078.30px;width:18px;height:10px;overflow:visible" viewBox="0 0 18 10"><path d="M0.5 0.5 H16.5 L8.5 9 Z" fill="#9c9c9c"/></svg>
<div class="t" style="left:2005.40px;top:1070.24px;font-size:27px;line-height:27px;font-weight:400;color:#000;transform:scaleX(0.9775);transform-origin:0 0;">A</div>
<svg style="position:absolute;left:2141.50px;top:1066.30px;width:31px;height:31px;overflow:visible" viewBox="0 0 31 31"><rect x="0.75" y="0.75" width="29.2" height="29.7" fill="none" stroke="#9ba0a4" stroke-width="1.6"/></svg>
<div style="left:2190.00px;top:1058.20px;width:81.60px;height:47.34px;background:linear-gradient(#fdfdfd,#ececec);border:1.5px solid #b5b5b5;border-radius:5px;box-sizing:border-box"></div>
<div class="t" style="left:2287.22px;top:1070.24px;font-size:27px;line-height:27px;font-weight:400;color:#000;transform:scaleX(0.9723);transform-origin:0 0;">Zeile markiert?</div>
<div class="t" style="left:57.15px;top:1121.98px;font-size:27px;line-height:27px;color:#383b3e;transform:scaleX(0.9260);transform-origin:0 0">159</div>
<div class="t" style="left:148.43px;top:1121.98px;font-size:27px;line-height:27px;font-weight:400;color:#000;transform:scaleX(1.0414);transform-origin:0 0;">itmarkierung</div>
<div class="t" style="left:624.51px;top:1121.98px;font-size:27px;line-height:27px;font-weight:400;color:#000;transform:scaleX(1.0370);transform-origin:0 0;">I5</div>
<div style="left:773.50px;top:1109.94px;width:48.20px;height:47.34px;background:linear-gradient(#fdfdfd,#ececec);border:1.5px solid #b5b5b5;border-radius:5px;box-sizing:border-box"></div>
<div style="left:966.50px;top:1109.94px;width:49.00px;height:47.34px;background:linear-gradient(#fdfdfd,#ececec);border:1.5px solid #b5b5b5;border-radius:5px;box-sizing:border-box"></div>
<svg style="position:absolute;left:1036.50px;top:1118.04px;width:31px;height:31px;overflow:visible" viewBox="0 0 31 31"><rect x="0.75" y="0.75" width="29.2" height="29.7" fill="none" stroke="#9ba0a4" stroke-width="1.6"/><path d="M6.8 15.2 L13.6 21.1 L26 9.2" fill="none" stroke="#a3a8ac" stroke-width="2.6"/></svg>
<div class="t" style="left:1115.33px;top:1121.98px;font-size:27px;line-height:27px;font-weight:400;color:#000;transform:scaleX(0.9049);transform-origin:0 0;">21</div>
<svg style="position:absolute;left:1181.00px;top:1118.04px;width:31px;height:31px;overflow:visible" viewBox="0 0 31 31"><rect x="0.75" y="0.75" width="29.2" height="29.7" fill="none" stroke="#9ba0a4" stroke-width="1.6"/><path d="M6.8 15.2 L13.6 21.1 L26 9.2" fill="none" stroke="#a3a8ac" stroke-width="2.6"/></svg>
<svg style="position:absolute;left:1277.50px;top:1118.04px;width:31px;height:31px;overflow:visible" viewBox="0 0 31 31"><rect x="0.75" y="0.75" width="29.2" height="29.7" fill="none" stroke="#9ba0a4" stroke-width="1.6"/><path d="M6.8 15.2 L13.6 21.1 L26 9.2" fill="none" stroke="#a3a8ac" stroke-width="2.6"/></svg>
<svg style="position:absolute;left:1405.80px;top:1118.04px;width:31px;height:31px;overflow:visible" viewBox="0 0 31 31"><rect x="0.75" y="0.75" width="29.2" height="29.7" fill="none" stroke="#9ba0a4" stroke-width="1.6"/></svg>
<div style="left:1491.50px;top:1110.74px;width:362.30px;height:45.94px;background:linear-gradient(#fefefe,#ededed);border:1.5px solid #cdcdcd;border-radius:5px;box-sizing:border-box"></div>
<svg style="position:absolute;left:1821.00px;top:1130.04px;width:18px;height:10px;overflow:visible" viewBox="0 0 18 10"><path d="M0.5 0.5 H16.5 L8.5 9 Z" fill="#9c9c9c"/></svg>
<div class="t" style="left:1502.32px;top:1121.98px;font-size:27px;line-height:27px;font-weight:400;color:#000;transform:scaleX(0.9822);transform-origin:0 0;">änderbar</div>
<div style="left:1858.50px;top:1110.74px;width:132.00px;height:45.94px;background:linear-gradient(#fefefe,#ededed);border:1.5px solid #cdcdcd;border-radius:5px;box-sizing:border-box"></div>
<svg style="position:absolute;left:1958.50px;top:1130.04px;width:18px;height:10px;overflow:visible" viewBox="0 0 18 10"><path d="M0.5 0.5 H16.5 L8.5 9 Z" fill="#9c9c9c"/></svg>
<div class="t" style="left:1868.90px;top:1121.98px;font-size:27px;line-height:27px;font-weight:400;color:#000;transform:scaleX(0.9775);transform-origin:0 0;">A</div>
<div style="left:1996.00px;top:1110.74px;width:127.50px;height:45.94px;background:linear-gradient(#fefefe,#ededed);border:1.5px solid #cdcdcd;border-radius:5px;box-sizing:border-box"></div>
<svg style="position:absolute;left:2091.50px;top:1130.04px;width:18px;height:10px;overflow:visible" viewBox="0 0 18 10"><path d="M0.5 0.5 H16.5 L8.5 9 Z" fill="#9c9c9c"/></svg>
<div class="t" style="left:2005.40px;top:1121.98px;font-size:27px;line-height:27px;font-weight:400;color:#000;transform:scaleX(0.9775);transform-origin:0 0;">A</div>
<svg style="position:absolute;left:2141.50px;top:1118.04px;width:31px;height:31px;overflow:visible" viewBox="0 0 31 31"><rect x="0.75" y="0.75" width="29.2" height="29.7" fill="none" stroke="#9ba0a4" stroke-width="1.6"/></svg>
<div style="left:2190.00px;top:1109.94px;width:81.60px;height:47.34px;background:linear-gradient(#fdfdfd,#ececec);border:1.5px solid #b5b5b5;border-radius:5px;box-sizing:border-box"></div>
<div class="t" style="left:2285.73px;top:1121.98px;font-size:27px;line-height:27px;font-weight:400;color:#000;transform:scaleX(1.0316);transform-origin:0 0;">Markierungsordnung</div>
<div class="t" style="left:57.15px;top:1173.72px;font-size:27px;line-height:27px;color:#383b3e;transform:scaleX(0.9260);transform-origin:0 0">160</div>
<div class="t" style="left:148.47px;top:1173.72px;font-size:27px;line-height:27px;font-weight:400;color:#000;transform:scaleX(1.0740);transform-origin:0 0;">bukonto</div>
<div class="t" style="left:627.01px;top:1173.72px;font-size:27px;line-height:27px;font-weight:400;color:#000;transform:scaleX(0.8925);transform-origin:0 0;">VPK0</div>
<div style="left:773.50px;top:1161.68px;width:48.20px;height:47.34px;background:linear-gradient(#fdfdfd,#ececec);border:1.5px solid #b5b5b5;border-radius:5px;box-sizing:border-box"></div>
<div style="left:966.50px;top:1161.68px;width:49.00px;height:47.34px;background:linear-gradient(#fdfdfd,#ececec);border:1.5px solid #b5b5b5;border-radius:5px;box-sizing:border-box"></div>
<svg style="position:absolute;left:1036.50px;top:1169.78px;width:31px;height:31px;overflow:visible" viewBox="0 0 31 31"><rect x="0.75" y="0.75" width="29.2" height="29.7" fill="none" stroke="#9ba0a4" stroke-width="1.6"/><path d="M6.8 15.2 L13.6 21.1 L26 9.2" fill="none" stroke="#a3a8ac" stroke-width="2.6"/></svg>
<div class="t" style="left:1115.24px;top:1173.72px;font-size:27px;line-height:27px;font-weight:400;color:#000;transform:scaleX(0.9049);transform-origin:0 0;">73</div>
<svg style="position:absolute;left:1181.00px;top:1169.78px;width:31px;height:31px;overflow:visible" viewBox="0 0 31 31"><rect x="0.75" y="0.75" width="29.2" height="29.7" fill="none" stroke="#9ba0a4" stroke-width="1.6"/></svg>
<svg style="position:absolute;left:1277.50px;top:1169.78px;width:31px;height:31px;overflow:visible" viewBox="0 0 31 31"><rect x="0.75" y="0.75" width="29.2" height="29.7" fill="none" stroke="#9ba0a4" stroke-width="1.6"/><path d="M6.8 15.2 L13.6 21.1 L26 9.2" fill="none" stroke="#a3a8ac" stroke-width="2.6"/></svg>
<svg style="position:absolute;left:1405.80px;top:1169.78px;width:31px;height:31px;overflow:visible" viewBox="0 0 31 31"><rect x="0.75" y="0.75" width="29.2" height="29.7" fill="none" stroke="#9ba0a4" stroke-width="1.6"/><path d="M6.8 15.2 L13.6 21.1 L26 9.2" fill="none" stroke="#a3a8ac" stroke-width="2.6"/></svg>
<div style="left:1491.50px;top:1162.48px;width:362.30px;height:45.94px;background:linear-gradient(#fefefe,#ededed);border:1.5px solid #cdcdcd;border-radius:5px;box-sizing:border-box"></div>
<svg style="position:absolute;left:1821.00px;top:1181.78px;width:18px;height:10px;overflow:visible" viewBox="0 0 18 10"><path d="M0.5 0.5 H16.5 L8.5 9 Z" fill="#9c9c9c"/></svg>
<div class="t" style="left:1501.93px;top:1173.72px;font-size:27px;line-height:27px;font-weight:400;color:#000;transform:scaleX(0.9853);transform-origin:0 0;">kerngesteuert</div>
<div style="left:1858.50px;top:1162.48px;width:132.00px;height:45.94px;background:linear-gradient(#fefefe,#ededed);border:1.5px solid #cdcdcd;border-radius:5px;box-sizing:border-box"></div>
<svg style="position:absolute;left:1958.50px;top:1181.78px;width:18px;height:10px;overflow:visible" viewBox="0 0 18 10"><path d="M0.5 0.5 H16.5 L8.5 9 Z" fill="#9c9c9c"/></svg>
<div class="t" style="left:1868.90px;top:1173.72px;font-size:27px;line-height:27px;font-weight:400;color:#000;transform:scaleX(0.9775);transform-origin:0 0;">A</div>
<div style="left:1996.00px;top:1162.48px;width:127.50px;height:45.94px;background:linear-gradient(#fefefe,#ededed);border:1.5px solid #cdcdcd;border-radius:5px;box-sizing:border-box"></div>
<svg style="position:absolute;left:2091.50px;top:1181.78px;width:18px;height:10px;overflow:visible" viewBox="0 0 18 10"><path d="M0.5 0.5 H16.5 L8.5 9 Z" fill="#9c9c9c"/></svg>
<div class="t" style="left:2005.40px;top:1173.72px;font-size:27px;line-height:27px;font-weight:400;color:#000;transform:scaleX(0.9775);transform-origin:0 0;">A</div>
<svg style="position:absolute;left:2141.50px;top:1169.78px;width:31px;height:31px;overflow:visible" viewBox="0 0 31 31"><rect x="0.75" y="0.75" width="29.2" height="29.7" fill="none" stroke="#9ba0a4" stroke-width="1.6"/></svg>
<div style="left:2190.00px;top:1161.68px;width:81.60px;height:47.34px;background:linear-gradient(#fdfdfd,#ececec);border:1.5px solid #b5b5b5;border-radius:5px;box-sizing:border-box"></div>
<div class="t" style="left:2285.80px;top:1173.72px;font-size:27px;line-height:27px;font-weight:400;color:#000;transform:scaleX(1.0006);transform-origin:0 0;">Buchungskonto, Kunde, Lieferant, Mitarbeiter</div>
<div class="t" style="left:57.15px;top:1225.46px;font-size:27px;line-height:27px;color:#383b3e;transform:scaleX(0.9260);transform-origin:0 0">161</div>
<div class="t" style="left:148.47px;top:1225.46px;font-size:27px;line-height:27px;font-weight:400;color:#000;transform:scaleX(1.0740);transform-origin:0 0;">bukonto</div>
<div class="t" style="left:437.01px;top:1225.46px;font-size:27px;line-height:27px;font-weight:400;color:#000;transform:scaleX(1.0553);transform-origin:0 0;">buynbukonto</div>
<div class="t" style="left:627.01px;top:1225.46px;font-size:27px;line-height:27px;font-weight:400;color:#000;transform:scaleX(0.8925);transform-origin:0 0;">VPK0</div>
<div class="t" style="left:836.11px;top:1225.46px;font-size:27px;line-height:27px;font-weight:400;color:#000;transform:scaleX(0.9127);transform-origin:0 0;">VPT0</div>
<div style="left:773.50px;top:1213.42px;width:48.20px;height:47.34px;background:linear-gradient(#fdfdfd,#ececec);border:1.5px solid #b5b5b5;border-radius:5px;box-sizing:border-box"></div>
<div style="left:966.50px;top:1213.42px;width:49.00px;height:47.34px;background:linear-gradient(#fdfdfd,#ececec);border:1.5px solid #b5b5b5;border-radius:5px;box-sizing:border-box"></div>
<svg style="position:absolute;left:1036.50px;top:1221.52px;width:31px;height:31px;overflow:visible" viewBox="0 0 31 31"><rect x="0.75" y="0.75" width="29.2" height="29.7" fill="none" stroke="#9ba0a4" stroke-width="1.6"/><path d="M6.8 15.2 L13.6 21.1 L26 9.2" fill="none" stroke="#a3a8ac" stroke-width="2.6"/></svg>
<div class="t" style="left:1115.24px;top:1225.46px;font-size:27px;line-height:27px;font-weight:400;color:#000;transform:scaleX(0.9049);transform-origin:0 0;">73</div>
<svg style="position:absolute;left:1181.00px;top:1221.52px;width:31px;height:31px;overflow:visible" viewBox="0 0 31 31"><rect x="0.75" y="0.75" width="29.2" height="29.7" fill="none" stroke="#9ba0a4" stroke-width="1.6"/></svg>
<svg style="position:absolute;left:1277.50px;top:1221.52px;width:31px;height:31px;overflow:visible" viewBox="0 0 31 31"><rect x="0.75" y="0.75" width="29.2" height="29.7" fill="none" stroke="#9ba0a4" stroke-width="1.6"/><path d="M6.8 15.2 L13.6 21.1 L26 9.2" fill="none" stroke="#a3a8ac" stroke-width="2.6"/></svg>
<svg style="position:absolute;left:1405.80px;top:1221.52px;width:31px;height:31px;overflow:visible" viewBox="0 0 31 31"><rect x="0.75" y="0.75" width="29.2" height="29.7" fill="none" stroke="#9ba0a4" stroke-width="1.6"/><path d="M6.8 15.2 L13.6 21.1 L26 9.2" fill="none" stroke="#a3a8ac" stroke-width="2.6"/></svg>
<div style="left:1491.50px;top:1214.22px;width:362.30px;height:45.94px;background:linear-gradient(#fefefe,#ededed);border:1.5px solid #cdcdcd;border-radius:5px;box-sizing:border-box"></div>
<svg style="position:absolute;left:1821.00px;top:1233.52px;width:18px;height:10px;overflow:visible" viewBox="0 0 18 10"><path d="M0.5 0.5 H16.5 L8.5 9 Z" fill="#9c9c9c"/></svg>
<div class="t" style="left:1501.93px;top:1225.46px;font-size:27px;line-height:27px;font-weight:400;color:#000;transform:scaleX(0.9853);transform-origin:0 0;">kerngesteuert</div>
<div style="left:1858.50px;top:1214.22px;width:132.00px;height:45.94px;background:linear-gradient(#fefefe,#ededed);border:1.5px solid #cdcdcd;border-radius:5px;box-sizing:border-box"></div>
<svg style="position:absolute;left:1958.50px;top:1233.52px;width:18px;height:10px;overflow:visible" viewBox="0 0 18 10"><path d="M0.5 0.5 H16.5 L8.5 9 Z" fill="#9c9c9c"/></svg>
<div class="t" style="left:1868.90px;top:1225.46px;font-size:27px;line-height:27px;font-weight:400;color:#000;transform:scaleX(0.9775);transform-origin:0 0;">A</div>
<div style="left:1996.00px;top:1214.22px;width:127.50px;height:45.94px;background:linear-gradient(#fefefe,#ededed);border:1.5px solid #cdcdcd;border-radius:5px;box-sizing:border-box"></div>
<svg style="position:absolute;left:2091.50px;top:1233.52px;width:18px;height:10px;overflow:visible" viewBox="0 0 18 10"><path d="M0.5 0.5 H16.5 L8.5 9 Z" fill="#9c9c9c"/></svg>
<div class="t" style="left:2005.40px;top:1225.46px;font-size:27px;line-height:27px;font-weight:400;color:#000;transform:scaleX(0.9775);transform-origin:0 0;">A</div>
<svg style="position:absolute;left:2141.50px;top:1221.52px;width:31px;height:31px;overflow:visible" viewBox="0 0 31 31"><rect x="0.75" y="0.75" width="29.2" height="29.7" fill="none" stroke="#9ba0a4" stroke-width="1.6"/></svg>
<div style="left:2190.00px;top:1213.42px;width:81.60px;height:47.34px;background:linear-gradient(#fdfdfd,#ececec);border:1.5px solid #b5b5b5;border-radius:5px;box-sizing:border-box"></div>
<div class="t" style="left:2285.80px;top:1225.46px;font-size:27px;line-height:27px;font-weight:400;color:#000;transform:scaleX(1.0006);transform-origin:0 0;">Buchungskonto, Kunde, Lieferant, Mitarbeiter</div>
<div class="t" style="left:57.15px;top:1277.20px;font-size:27px;line-height:27px;color:#383b3e;transform:scaleX(0.9260);transform-origin:0 0">162</div>
<div class="t" style="left:148.50px;top:1277.20px;font-size:27px;line-height:27px;font-weight:400;color:#000;transform:scaleX(1.0597);transform-origin:0 0;">busoll</div>
<div class="t" style="left:624.70px;top:1277.20px;font-size:27px;line-height:27px;font-weight:400;color:#000;transform:scaleX(1.0903);transform-origin:0 0;">B</div>
<div style="left:773.50px;top:1265.16px;width:48.20px;height:47.34px;background:linear-gradient(#fdfdfd,#ececec);border:1.5px solid #b5b5b5;border-radius:5px;box-sizing:border-box"></div>
<div style="left:966.50px;top:1265.16px;width:49.00px;height:47.34px;background:linear-gradient(#fdfdfd,#ececec);border:1.5px solid #b5b5b5;border-radius:5px;box-sizing:border-box"></div>
<svg style="position:absolute;left:1036.50px;top:1273.26px;width:31px;height:31px;overflow:visible" viewBox="0 0 31 31"><rect x="0.75" y="0.75" width="29.2" height="29.7" fill="none" stroke="#9ba0a4" stroke-width="1.6"/><path d="M6.8 15.2 L13.6 21.1 L26 9.2" fill="none" stroke="#a3a8ac" stroke-width="2.6"/></svg>
<div class="t" style="left:1114.88px;top:1277.20px;font-size:27px;line-height:27px;font-weight:400;color:#000;transform:scaleX(0.9049);transform-origin:0 0;">74</div>
<svg style="position:absolute;left:1181.00px;top:1273.26px;width:31px;height:31px;overflow:visible" viewBox="0 0 31 31"><rect x="0.75" y="0.75" width="29.2" height="29.7" fill="none" stroke="#9ba0a4" stroke-width="1.6"/></svg>
<svg style="position:absolute;left:1277.50px;top:1273.26px;width:31px;height:31px;overflow:visible" viewBox="0 0 31 31"><rect x="0.75" y="0.75" width="29.2" height="29.7" fill="none" stroke="#9ba0a4" stroke-width="1.6"/><path d="M6.8 15.2 L13.6 21.1 L26 9.2" fill="none" stroke="#a3a8ac" stroke-width="2.6"/></svg>
<svg style="position:absolute;left:1405.80px;top:1273.26px;width:31px;height:31px;overflow:visible" viewBox="0 0 31 31"><rect x="0.75" y="0.75" width="29.2" height="29.7" fill="none" stroke="#9ba0a4" stroke-width="1.6"/><path d="M6.8 15.2 L13.6 21.1 L26 9.2" fill="none" stroke="#a3a8ac" stroke-width="2.6"/></svg>
<div style="left:1491.50px;top:1265.96px;width:362.30px;height:45.94px;background:linear-gradient(#fefefe,#ededed);border:1.5px solid #cdcdcd;border-radius:5px;box-sizing:border-box"></div>
<svg style="position:absolute;left:1821.00px;top:1285.26px;width:18px;height:10px;overflow:visible" viewBox="0 0 18 10"><path d="M0.5 0.5 H16.5 L8.5 9 Z" fill="#9c9c9c"/></svg>
<div class="t" style="left:1501.93px;top:1277.20px;font-size:27px;line-height:27px;font-weight:400;color:#000;transform:scaleX(0.9853);transform-origin:0 0;">kerngesteuert</div>
<div style="left:1858.50px;top:1265.96px;width:132.00px;height:45.94px;background:linear-gradient(#fefefe,#ededed);border:1.5px solid #cdcdcd;border-radius:5px;box-sizing:border-box"></div>
<svg style="position:absolute;left:1958.50px;top:1285.26px;width:18px;height:10px;overflow:visible" viewBox="0 0 18 10"><path d="M0.5 0.5 H16.5 L8.5 9 Z" fill="#9c9c9c"/></svg>
<div class="t" style="left:1868.90px;top:1277.20px;font-size:27px;line-height:27px;font-weight:400;color:#000;transform:scaleX(0.9775);transform-origin:0 0;">A</div>
<div style="left:1996.00px;top:1265.96px;width:127.50px;height:45.94px;background:linear-gradient(#fefefe,#ededed);border:1.5px solid #cdcdcd;border-radius:5px;box-sizing:border-box"></div>
<svg style="position:absolute;left:2091.50px;top:1285.26px;width:18px;height:10px;overflow:visible" viewBox="0 0 18 10"><path d="M0.5 0.5 H16.5 L8.5 9 Z" fill="#9c9c9c"/></svg>
<div class="t" style="left:2005.40px;top:1277.20px;font-size:27px;line-height:27px;font-weight:400;color:#000;transform:scaleX(0.9775);transform-origin:0 0;">A</div>
<svg style="position:absolute;left:2141.50px;top:1273.26px;width:31px;height:31px;overflow:visible" viewBox="0 0 31 31"><rect x="0.75" y="0.75" width="29.2" height="29.7" fill="none" stroke="#9ba0a4" stroke-width="1.6"/></svg>
<div style="left:2190.00px;top:1265.16px;width:81.60px;height:47.34px;background:linear-gradient(#fdfdfd,#ececec);border:1.5px solid #b5b5b5;border-radius:5px;box-sizing:border-box"></div>
<div class="t" style="left:2287.10px;top:1277.20px;font-size:27px;line-height:27px;font-weight:400;color:#000;transform:scaleX(0.9135);transform-origin:0 0;">Soll?</div>
<div class="t" style="left:57.15px;top:1328.94px;font-size:27px;line-height:27px;color:#383b3e;transform:scaleX(0.9260);transform-origin:0 0">163</div>
<div class="t" style="left:148.54px;top:1328.94px;font-size:27px;line-height:27px;font-weight:400;color:#000;transform:scaleX(1.0359);transform-origin:0 0;">bubetrag</div>
<div class="t" style="left:626.31px;top:1328.94px;font-size:27px;line-height:27px;font-weight:400;color:#000;transform:scaleX(0.8823);transform-origin:0 0;">ARTR52000</div>
<div style="left:773.50px;top:1316.90px;width:48.20px;height:47.34px;background:linear-gradient(#fdfdfd,#ececec);border:1.5px solid #b5b5b5;border-radius:5px;box-sizing:border-box"></div>
<div style="left:966.50px;top:1316.90px;width:49.00px;height:47.34px;background:linear-gradient(#fdfdfd,#ececec);border:1.5px solid #b5b5b5;border-radius:5px;box-sizing:border-box"></div>
<svg style="position:absolute;left:1036.50px;top:1325.00px;width:31px;height:31px;overflow:visible" viewBox="0 0 31 31"><rect x="0.75" y="0.75" width="29.2" height="29.7" fill="none" stroke="#9ba0a4" stroke-width="1.6"/><path d="M6.8 15.2 L13.6 21.1 L26 9.2" fill="none" stroke="#a3a8ac" stroke-width="2.6"/></svg>
<div class="t" style="left:1115.15px;top:1328.94px;font-size:27px;line-height:27px;font-weight:400;color:#000;transform:scaleX(0.9049);transform-origin:0 0;">75</div>
<svg style="position:absolute;left:1181.00px;top:1325.00px;width:31px;height:31px;overflow:visible" viewBox="0 0 31 31"><rect x="0.75" y="0.75" width="29.2" height="29.7" fill="none" stroke="#9ba0a4" stroke-width="1.6"/></svg>
<svg style="position:absolute;left:1277.50px;top:1325.00px;width:31px;height:31px;overflow:visible" viewBox="0 0 31 31"><rect x="0.75" y="0.75" width="29.2" height="29.7" fill="none" stroke="#9ba0a4" stroke-width="1.6"/><path d="M6.8 15.2 L13.6 21.1 L26 9.2" fill="none" stroke="#a3a8ac" stroke-width="2.6"/></svg>
<svg style="position:absolute;left:1405.80px;top:1325.00px;width:31px;height:31px;overflow:visible" viewBox="0 0 31 31"><rect x="0.75" y="0.75" width="29.2" height="29.7" fill="none" stroke="#9ba0a4" stroke-width="1.6"/><path d="M6.8 15.2 L13.6 21.1 L26 9.2" fill="none" stroke="#a3a8ac" stroke-width="2.6"/></svg>
<div style="left:1491.50px;top:1317.70px;width:362.30px;height:45.94px;background:linear-gradient(#fefefe,#ededed);border:1.5px solid #cdcdcd;border-radius:5px;box-sizing:border-box"></div>
<svg style="position:absolute;left:1821.00px;top:1337.00px;width:18px;height:10px;overflow:visible" viewBox="0 0 18 10"><path d="M0.5 0.5 H16.5 L8.5 9 Z" fill="#9c9c9c"/></svg>
<div class="t" style="left:1501.93px;top:1328.94px;font-size:27px;line-height:27px;font-weight:400;color:#000;transform:scaleX(0.9853);transform-origin:0 0;">kerngesteuert</div>
<div style="left:1858.50px;top:1317.70px;width:132.00px;height:45.94px;background:linear-gradient(#fefefe,#ededed);border:1.5px solid #cdcdcd;border-radius:5px;box-sizing:border-box"></div>
<svg style="position:absolute;left:1958.50px;top:1337.00px;width:18px;height:10px;overflow:visible" viewBox="0 0 18 10"><path d="M0.5 0.5 H16.5 L8.5 9 Z" fill="#9c9c9c"/></svg>
<div class="t" style="left:1868.90px;top:1328.94px;font-size:27px;line-height:27px;font-weight:400;color:#000;transform:scaleX(0.9775);transform-origin:0 0;">A</div>
<div style="left:1996.00px;top:1317.70px;width:127.50px;height:45.94px;background:linear-gradient(#fefefe,#ededed);border:1.5px solid #cdcdcd;border-radius:5px;box-sizing:border-box"></div>
<svg style="position:absolute;left:2091.50px;top:1337.00px;width:18px;height:10px;overflow:visible" viewBox="0 0 18 10"><path d="M0.5 0.5 H16.5 L8.5 9 Z" fill="#9c9c9c"/></svg>
<div class="t" style="left:2005.40px;top:1328.94px;font-size:27px;line-height:27px;font-weight:400;color:#000;transform:scaleX(0.9775);transform-origin:0 0;">A</div>
<svg style="position:absolute;left:2141.50px;top:1325.00px;width:31px;height:31px;overflow:visible" viewBox="0 0 31 31"><rect x="0.75" y="0.75" width="29.2" height="29.7" fill="none" stroke="#9ba0a4" stroke-width="1.6"/></svg>
<div style="left:2190.00px;top:1316.90px;width:81.60px;height:47.34px;background:linear-gradient(#fdfdfd,#ececec);border:1.5px solid #b5b5b5;border-radius:5px;box-sizing:border-box"></div>
<div class="t" style="left:2285.99px;top:1328.94px;font-size:27px;line-height:27px;font-weight:400;color:#000;transform:scaleX(1.0049);transform-origin:0 0;">Betrag/Sollbetrag</div>
<div class="t" style="left:57.15px;top:1380.68px;font-size:27px;line-height:27px;color:#383b3e;transform:scaleX(0.9260);transform-origin:0 0">164</div>
<div class="t" style="left:148.49px;top:1380.68px;font-size:27px;line-height:27px;font-weight:400;color:#000;transform:scaleX(1.0671);transform-origin:0 0;">bustrgl</div>
<div class="t" style="left:625.16px;top:1380.68px;font-size:27px;line-height:27px;font-weight:400;color:#000;transform:scaleX(0.8804);transform-origin:0 0;">PS58:5</div>
<div style="left:773.50px;top:1368.64px;width:48.20px;height:47.34px;background:linear-gradient(#fdfdfd,#ececec);border:1.5px solid #b5b5b5;border-radius:5px;box-sizing:border-box"></div>
<div style="left:966.50px;top:1368.64px;width:49.00px;height:47.34px;background:linear-gradient(#fdfdfd,#ececec);border:1.5px solid #b5b5b5;border-radius:5px;box-sizing:border-box"></div>
<svg style="position:absolute;left:1036.50px;top:1376.74px;width:31px;height:31px;overflow:visible" viewBox="0 0 31 31"><rect x="0.75" y="0.75" width="29.2" height="29.7" fill="none" stroke="#9ba0a4" stroke-width="1.6"/><path d="M6.8 15.2 L13.6 21.1 L26 9.2" fill="none" stroke="#a3a8ac" stroke-width="2.6"/></svg>
<div class="t" style="left:1115.24px;top:1380.68px;font-size:27px;line-height:27px;font-weight:400;color:#000;transform:scaleX(0.9049);transform-origin:0 0;">76</div>
<svg style="position:absolute;left:1181.00px;top:1376.74px;width:31px;height:31px;overflow:visible" viewBox="0 0 31 31"><rect x="0.75" y="0.75" width="29.2" height="29.7" fill="none" stroke="#9ba0a4" stroke-width="1.6"/></svg>
<svg style="position:absolute;left:1277.50px;top:1376.74px;width:31px;height:31px;overflow:visible" viewBox="0 0 31 31"><rect x="0.75" y="0.75" width="29.2" height="29.7" fill="none" stroke="#9ba0a4" stroke-width="1.6"/><path d="M6.8 15.2 L13.6 21.1 L26 9.2" fill="none" stroke="#a3a8ac" stroke-width="2.6"/></svg>
<svg style="position:absolute;left:1405.80px;top:1376.74px;width:31px;height:31px;overflow:visible" viewBox="0 0 31 31"><rect x="0.75" y="0.75" width="29.2" height="29.7" fill="none" stroke="#9ba0a4" stroke-width="1.6"/><path d="M6.8 15.2 L13.6 21.1 L26 9.2" fill="none" stroke="#a3a8ac" stroke-width="2.6"/></svg>
<div style="left:1491.50px;top:1369.44px;width:362.30px;height:45.94px;background:linear-gradient(#fefefe,#ededed);border:1.5px solid #cdcdcd;border-radius:5px;box-sizing:border-box"></div>
<svg style="position:absolute;left:1821.00px;top:1388.74px;width:18px;height:10px;overflow:visible" viewBox="0 0 18 10"><path d="M0.5 0.5 H16.5 L8.5 9 Z" fill="#9c9c9c"/></svg>
<div class="t" style="left:1501.93px;top:1380.68px;font-size:27px;line-height:27px;font-weight:400;color:#000;transform:scaleX(0.9853);transform-origin:0 0;">kerngesteuert</div>
<div style="left:1858.50px;top:1369.44px;width:132.00px;height:45.94px;background:linear-gradient(#fefefe,#ededed);border:1.5px solid #cdcdcd;border-radius:5px;box-sizing:border-box"></div>
<svg style="position:absolute;left:1958.50px;top:1388.74px;width:18px;height:10px;overflow:visible" viewBox="0 0 18 10"><path d="M0.5 0.5 H16.5 L8.5 9 Z" fill="#9c9c9c"/></svg>
<div class="t" style="left:1868.90px;top:1380.68px;font-size:27px;line-height:27px;font-weight:400;color:#000;transform:scaleX(0.9775);transform-origin:0 0;">A</div>
<div style="left:1996.00px;top:1369.44px;width:127.50px;height:45.94px;background:linear-gradient(#fefefe,#ededed);border:1.5px solid #cdcdcd;border-radius:5px;box-sizing:border-box"></div>
<svg style="position:absolute;left:2091.50px;top:1388.74px;width:18px;height:10px;overflow:visible" viewBox="0 0 18 10"><path d="M0.5 0.5 H16.5 L8.5 9 Z" fill="#9c9c9c"/></svg>
<div class="t" style="left:2005.40px;top:1380.68px;font-size:27px;line-height:27px;font-weight:400;color:#000;transform:scaleX(0.9775);transform-origin:0 0;">A</div>
<svg style="position:absolute;left:2141.50px;top:1376.74px;width:31px;height:31px;overflow:visible" viewBox="0 0 31 31"><rect x="0.75" y="0.75" width="29.2" height="29.7" fill="none" stroke="#9ba0a4" stroke-width="1.6"/></svg>
<div style="left:2190.00px;top:1368.64px;width:81.60px;height:47.34px;background:linear-gradient(#fdfdfd,#ececec);border:1.5px solid #b5b5b5;border-radius:5px;box-sizing:border-box"></div>
<div class="t" style="left:2287.04px;top:1380.68px;font-size:27px;line-height:27px;font-weight:400;color:#000;transform:scaleX(0.9663);transform-origin:0 0;">Steuerregel</div>
<div class="t" style="left:57.15px;top:1432.42px;font-size:27px;line-height:27px;color:#383b3e;transform:scaleX(0.9260);transform-origin:0 0">165</div>
<div class="t" style="left:148.55px;top:1432.42px;font-size:27px;line-height:27px;font-weight:400;color:#000;transform:scaleX(1.0286);transform-origin:0 0;">buzstrgl</div>
<div class="t" style="left:625.13px;top:1432.42px;font-size:27px;line-height:27px;font-weight:400;color:#000;transform:scaleX(0.8963);transform-origin:0 0;">PS58:15</div>
<div style="left:773.50px;top:1420.38px;width:48.20px;height:47.34px;background:linear-gradient(#fdfdfd,#ececec);border:1.5px solid #b5b5b5;border-radius:5px;box-sizing:border-box"></div>
<div style="left:966.50px;top:1420.38px;width:49.00px;height:47.34px;background:linear-gradient(#fdfdfd,#ececec);border:1.5px solid #b5b5b5;border-radius:5px;box-sizing:border-box"></div>
<svg style="position:absolute;left:1036.50px;top:1428.48px;width:31px;height:31px;overflow:visible" viewBox="0 0 31 31"><rect x="0.75" y="0.75" width="29.2" height="29.7" fill="none" stroke="#9ba0a4" stroke-width="1.6"/><path d="M6.8 15.2 L13.6 21.1 L26 9.2" fill="none" stroke="#a3a8ac" stroke-width="2.6"/></svg>
<div class="t" style="left:1115.33px;top:1432.42px;font-size:27px;line-height:27px;font-weight:400;color:#000;transform:scaleX(0.9049);transform-origin:0 0;">77</div>
<svg style="position:absolute;left:1181.00px;top:1428.48px;width:31px;height:31px;overflow:visible" viewBox="0 0 31 31"><rect x="0.75" y="0.75" width="29.2" height="29.7" fill="none" stroke="#9ba0a4" stroke-width="1.6"/></svg>
<svg style="position:absolute;left:1277.50px;top:1428.48px;width:31px;height:31px;overflow:visible" viewBox="0 0 31 31"><rect x="0.75" y="0.75" width="29.2" height="29.7" fill="none" stroke="#9ba0a4" stroke-width="1.6"/><path d="M6.8 15.2 L13.6 21.1 L26 9.2" fill="none" stroke="#a3a8ac" stroke-width="2.6"/></svg>
<svg style="position:absolute;left:1405.80px;top:1428.48px;width:31px;height:31px;overflow:visible" viewBox="0 0 31 31"><rect x="0.75" y="0.75" width="29.2" height="29.7" fill="none" stroke="#9ba0a4" stroke-width="1.6"/><path d="M6.8 15.2 L13.6 21.1 L26 9.2" fill="none" stroke="#a3a8ac" stroke-width="2.6"/></svg>
<div style="left:1491.50px;top:1421.18px;width:362.30px;height:45.94px;background:linear-gradient(#fefefe,#ededed);border:1.5px solid #cdcdcd;border-radius:5px;box-sizing:border-box"></div>
<svg style="position:absolute;left:1821.00px;top:1440.48px;width:18px;height:10px;overflow:visible" viewBox="0 0 18 10"><path d="M0.5 0.5 H16.5 L8.5 9 Z" fill="#9c9c9c"/></svg>
<div class="t" style="left:1501.58px;top:1432.42px;font-size:27px;line-height:27px;font-weight:400;color:#000;transform:scaleX(1.0138);transform-origin:0 0;">immer geschützt</div>
<div style="left:1858.50px;top:1421.18px;width:132.00px;height:45.94px;background:linear-gradient(#fefefe,#ededed);border:1.5px solid #cdcdcd;border-radius:5px;box-sizing:border-box"></div>
<svg style="position:absolute;left:1958.50px;top:1440.48px;width:18px;height:10px;overflow:visible" viewBox="0 0 18 10"><path d="M0.5 0.5 H16.5 L8.5 9 Z" fill="#9c9c9c"/></svg>
<div class="t" style="left:1868.90px;top:1432.42px;font-size:27px;line-height:27px;font-weight:400;color:#000;transform:scaleX(0.9775);transform-origin:0 0;">A</div>
<div style="left:1996.00px;top:1421.18px;width:127.50px;height:45.94px;background:linear-gradient(#fefefe,#ededed);border:1.5px solid #cdcdcd;border-radius:5px;box-sizing:border-box"></div>
<svg style="position:absolute;left:2091.50px;top:1440.48px;width:18px;height:10px;overflow:visible" viewBox="0 0 18 10"><path d="M0.5 0.5 H16.5 L8.5 9 Z" fill="#9c9c9c"/></svg>
<div class="t" style="left:2005.40px;top:1432.42px;font-size:27px;line-height:27px;font-weight:400;color:#000;transform:scaleX(0.9775);transform-origin:0 0;">A</div>
<svg style="position:absolute;left:2141.50px;top:1428.48px;width:31px;height:31px;overflow:visible" viewBox="0 0 31 31"><rect x="0.75" y="0.75" width="29.2" height="29.7" fill="none" stroke="#9ba0a4" stroke-width="1.6"/></svg>
<div style="left:2190.00px;top:1420.38px;width:81.60px;height:47.34px;background:linear-gradient(#fdfdfd,#ececec);border:1.5px solid #b5b5b5;border-radius:5px;box-sizing:border-box"></div>
<div class="t" style="left:2287.03px;top:1432.42px;font-size:27px;line-height:27px;font-weight:400;color:#000;transform:scaleX(0.9741);transform-origin:0 0;">Steuerregel-Zeile</div>
<div class="t" style="left:57.15px;top:1484.16px;font-size:27px;line-height:27px;color:#383b3e;transform:scaleX(0.9260);transform-origin:0 0">166</div>
<div class="t" style="left:148.60px;top:1484.16px;font-size:27px;line-height:27px;font-weight:400;color:#000;">busteuer</div>
<div class="t" style="left:625.11px;top:1484.16px;font-size:27px;line-height:27px;font-weight:400;color:#000;transform:scaleX(0.9045);transform-origin:0 0;">P58:1</div>
<div style="left:773.50px;top:1472.12px;width:48.20px;height:47.34px;background:linear-gradient(#fdfdfd,#ececec);border:1.5px solid #b5b5b5;border-radius:5px;box-sizing:border-box"></div>
<div style="left:966.50px;top:1472.12px;width:49.00px;height:47.34px;background:linear-gradient(#fdfdfd,#ececec);border:1.5px solid #b5b5b5;border-radius:5px;box-sizing:border-box"></div>
<svg style="position:absolute;left:1036.50px;top:1480.22px;width:31px;height:31px;overflow:visible" viewBox="0 0 31 31"><rect x="0.75" y="0.75" width="29.2" height="29.7" fill="none" stroke="#9ba0a4" stroke-width="1.6"/><path d="M6.8 15.2 L13.6 21.1 L26 9.2" fill="none" stroke="#a3a8ac" stroke-width="2.6"/></svg>
<div class="t" style="left:1115.15px;top:1484.16px;font-size:27px;line-height:27px;font-weight:400;color:#000;transform:scaleX(0.9049);transform-origin:0 0;">78</div>
<svg style="position:absolute;left:1181.00px;top:1480.22px;width:31px;height:31px;overflow:visible" viewBox="0 0 31 31"><rect x="0.75" y="0.75" width="29.2" height="29.7" fill="none" stroke="#9ba0a4" stroke-width="1.6"/></svg>
<svg style="position:absolute;left:1277.50px;top:1480.22px;width:31px;height:31px;overflow:visible" viewBox="0 0 31 31"><rect x="0.75" y="0.75" width="29.2" height="29.7" fill="none" stroke="#9ba0a4" stroke-width="1.6"/><path d="M6.8 15.2 L13.6 21.1 L26 9.2" fill="none" stroke="#a3a8ac" stroke-width="2.6"/></svg>
<svg style="position:absolute;left:1405.80px;top:1480.22px;width:31px;height:31px;overflow:visible" viewBox="0 0 31 31"><rect x="0.75" y="0.75" width="29.2" height="29.7" fill="none" stroke="#9ba0a4" stroke-width="1.6"/><path d="M6.8 15.2 L13.6 21.1 L26 9.2" fill="none" stroke="#a3a8ac" stroke-width="2.6"/></svg>
<div style="left:1491.50px;top:1472.92px;width:362.30px;height:45.94px;background:linear-gradient(#fefefe,#ededed);border:1.5px solid #cdcdcd;border-radius:5px;box-sizing:border-box"></div>
<svg style="position:absolute;left:1821.00px;top:1492.22px;width:18px;height:10px;overflow:visible" viewBox="0 0 18 10"><path d="M0.5 0.5 H16.5 L8.5 9 Z" fill="#9c9c9c"/></svg>
<div class="t" style="left:1501.93px;top:1484.16px;font-size:27px;line-height:27px;font-weight:400;color:#000;transform:scaleX(0.9853);transform-origin:0 0;">kerngesteuert</div>
<div style="left:1858.50px;top:1472.92px;width:132.00px;height:45.94px;background:linear-gradient(#fefefe,#ededed);border:1.5px solid #cdcdcd;border-radius:5px;box-sizing:border-box"></div>
<svg style="position:absolute;left:1958.50px;top:1492.22px;width:18px;height:10px;overflow:visible" viewBox="0 0 18 10"><path d="M0.5 0.5 H16.5 L8.5 9 Z" fill="#9c9c9c"/></svg>
<div class="t" style="left:1868.90px;top:1484.16px;font-size:27px;line-height:27px;font-weight:400;color:#000;transform:scaleX(0.9775);transform-origin:0 0;">A</div>
<div style="left:1996.00px;top:1472.92px;width:127.50px;height:45.94px;background:linear-gradient(#fefefe,#ededed);border:1.5px solid #cdcdcd;border-radius:5px;box-sizing:border-box"></div>
<svg style="position:absolute;left:2091.50px;top:1492.22px;width:18px;height:10px;overflow:visible" viewBox="0 0 18 10"><path d="M0.5 0.5 H16.5 L8.5 9 Z" fill="#9c9c9c"/></svg>
<div class="t" style="left:2005.40px;top:1484.16px;font-size:27px;line-height:27px;font-weight:400;color:#000;transform:scaleX(0.9775);transform-origin:0 0;">A</div>
<svg style="position:absolute;left:2141.50px;top:1480.22px;width:31px;height:31px;overflow:visible" viewBox="0 0 31 31"><rect x="0.75" y="0.75" width="29.2" height="29.7" fill="none" stroke="#9ba0a4" stroke-width="1.6"/></svg>
<div style="left:2190.00px;top:1472.12px;width:81.60px;height:47.34px;background:linear-gradient(#fdfdfd,#ececec);border:1.5px solid #b5b5b5;border-radius:5px;box-sizing:border-box"></div>
<div class="t" style="left:2287.06px;top:1484.16px;font-size:27px;line-height:27px;font-weight:400;color:#000;transform:scaleX(0.9531);transform-origin:0 0;">Steuerschlüssel</div>
<div class="t" style="left:57.15px;top:1535.90px;font-size:27px;line-height:27px;color:#383b3e;transform:scaleX(0.9260);transform-origin:0 0">167</div>
<div class="t" style="left:148.54px;top:1535.90px;font-size:27px;line-height:27px;font-weight:400;color:#000;transform:scaleX(1.0342);transform-origin:0 0;">bukart</div>
<div class="t" style="left:626.31px;top:1535.90px;font-size:27px;line-height:27px;font-weight:400;color:#000;transform:scaleX(0.9482);transform-origin:0 0;">A145</div>
<div style="left:773.50px;top:1523.86px;width:48.20px;height:47.34px;background:linear-gradient(#fdfdfd,#ececec);border:1.5px solid #b5b5b5;border-radius:5px;box-sizing:border-box"></div>
<div style="left:966.50px;top:1523.86px;width:49.00px;height:47.34px;background:linear-gradient(#fdfdfd,#ececec);border:1.5px solid #b5b5b5;border-radius:5px;box-sizing:border-box"></div>
<svg style="position:absolute;left:1036.50px;top:1531.96px;width:31px;height:31px;overflow:visible" viewBox="0 0 31 31"><rect x="0.75" y="0.75" width="29.2" height="29.7" fill="none" stroke="#9ba0a4" stroke-width="1.6"/><path d="M6.8 15.2 L13.6 21.1 L26 9.2" fill="none" stroke="#a3a8ac" stroke-width="2.6"/></svg>
<div class="t" style="left:1115.33px;top:1535.90px;font-size:27px;line-height:27px;font-weight:400;color:#000;transform:scaleX(0.9049);transform-origin:0 0;">79</div>
<svg style="position:absolute;left:1181.00px;top:1531.96px;width:31px;height:31px;overflow:visible" viewBox="0 0 31 31"><rect x="0.75" y="0.75" width="29.2" height="29.7" fill="none" stroke="#9ba0a4" stroke-width="1.6"/></svg>
<svg style="position:absolute;left:1277.50px;top:1531.96px;width:31px;height:31px;overflow:visible" viewBox="0 0 31 31"><rect x="0.75" y="0.75" width="29.2" height="29.7" fill="none" stroke="#9ba0a4" stroke-width="1.6"/><path d="M6.8 15.2 L13.6 21.1 L26 9.2" fill="none" stroke="#a3a8ac" stroke-width="2.6"/></svg>
<svg style="position:absolute;left:1405.80px;top:1531.96px;width:31px;height:31px;overflow:visible" viewBox="0 0 31 31"><rect x="0.75" y="0.75" width="29.2" height="29.7" fill="none" stroke="#9ba0a4" stroke-width="1.6"/><path d="M6.8 15.2 L13.6 21.1 L26 9.2" fill="none" stroke="#a3a8ac" stroke-width="2.6"/></svg>
<div style="left:1491.50px;top:1524.66px;width:362.30px;height:45.94px;background:linear-gradient(#fefefe,#ededed);border:1.5px solid #cdcdcd;border-radius:5px;box-sizing:border-box"></div>
<svg style="position:absolute;left:1821.00px;top:1543.96px;width:18px;height:10px;overflow:visible" viewBox="0 0 18 10"><path d="M0.5 0.5 H16.5 L8.5 9 Z" fill="#9c9c9c"/></svg>
<div class="t" style="left:1501.93px;top:1535.90px;font-size:27px;line-height:27px;font-weight:400;color:#000;transform:scaleX(0.9853);transform-origin:0 0;">kerngesteuert</div>
<div style="left:1858.50px;top:1524.66px;width:132.00px;height:45.94px;background:linear-gradient(#fefefe,#ededed);border:1.5px solid #cdcdcd;border-radius:5px;box-sizing:border-box"></div>
<svg style="position:absolute;left:1958.50px;top:1543.96px;width:18px;height:10px;overflow:visible" viewBox="0 0 18 10"><path d="M0.5 0.5 H16.5 L8.5 9 Z" fill="#9c9c9c"/></svg>
<div class="t" style="left:1868.90px;top:1535.90px;font-size:27px;line-height:27px;font-weight:400;color:#000;transform:scaleX(0.9775);transform-origin:0 0;">A</div>
<div style="left:1996.00px;top:1524.66px;width:127.50px;height:45.94px;background:linear-gradient(#fefefe,#ededed);border:1.5px solid #cdcdcd;border-radius:5px;box-sizing:border-box"></div>
<svg style="position:absolute;left:2091.50px;top:1543.96px;width:18px;height:10px;overflow:visible" viewBox="0 0 18 10"><path d="M0.5 0.5 H16.5 L8.5 9 Z" fill="#9c9c9c"/></svg>
<div class="t" style="left:2005.40px;top:1535.90px;font-size:27px;line-height:27px;font-weight:400;color:#000;transform:scaleX(0.9775);transform-origin:0 0;">A</div>
<svg style="position:absolute;left:2141.50px;top:1531.96px;width:31px;height:31px;overflow:visible" viewBox="0 0 31 31"><rect x="0.75" y="0.75" width="29.2" height="29.7" fill="none" stroke="#9ba0a4" stroke-width="1.6"/></svg>
<div style="left:2190.00px;top:1523.86px;width:81.60px;height:47.34px;background:linear-gradient(#fdfdfd,#ececec);border:1.5px solid #b5b5b5;border-radius:5px;box-sizing:border-box"></div>
<div class="t" style="left:2285.97px;top:1535.90px;font-size:27px;line-height:27px;font-weight:400;color:#000;transform:scaleX(1.0122);transform-origin:0 0;">Kontenart</div>
<div class="t" style="left:57.15px;top:1587.64px;font-size:27px;line-height:27px;color:#383b3e;transform:scaleX(0.9260);transform-origin:0 0">168</div>
<div class="t" style="left:148.59px;top:1587.64px;font-size:27px;line-height:27px;font-weight:400;color:#000;transform:scaleX(1.0079);transform-origin:0 0;">bukarta</div>
<div class="t" style="left:626.31px;top:1587.64px;font-size:27px;line-height:27px;font-weight:400;color:#000;transform:scaleX(0.9482);transform-origin:0 0;">A145</div>
<div style="left:773.50px;top:1575.60px;width:48.20px;height:47.34px;background:linear-gradient(#fdfdfd,#ececec);border:1.5px solid #b5b5b5;border-radius:5px;box-sizing:border-box"></div>
<div style="left:966.50px;top:1575.60px;width:49.00px;height:47.34px;background:linear-gradient(#fdfdfd,#ececec);border:1.5px solid #b5b5b5;border-radius:5px;box-sizing:border-box"></div>
<svg style="position:absolute;left:1036.50px;top:1583.70px;width:31px;height:31px;overflow:visible" viewBox="0 0 31 31"><rect x="0.75" y="0.75" width="29.2" height="29.7" fill="none" stroke="#9ba0a4" stroke-width="1.6"/><path d="M6.8 15.2 L13.6 21.1 L26 9.2" fill="none" stroke="#a3a8ac" stroke-width="2.6"/></svg>
<div class="t" style="left:1115.33px;top:1587.64px;font-size:27px;line-height:27px;font-weight:400;color:#000;transform:scaleX(0.9049);transform-origin:0 0;">79</div>
<svg style="position:absolute;left:1181.00px;top:1583.70px;width:31px;height:31px;overflow:visible" viewBox="0 0 31 31"><rect x="0.75" y="0.75" width="29.2" height="29.7" fill="none" stroke="#9ba0a4" stroke-width="1.6"/></svg>
<svg style="position:absolute;left:1277.50px;top:1583.70px;width:31px;height:31px;overflow:visible" viewBox="0 0 31 31"><rect x="0.75" y="0.75" width="29.2" height="29.7" fill="none" stroke="#9ba0a4" stroke-width="1.6"/><path d="M6.8 15.2 L13.6 21.1 L26 9.2" fill="none" stroke="#a3a8ac" stroke-width="2.6"/></svg>
<svg style="position:absolute;left:1405.80px;top:1583.70px;width:31px;height:31px;overflow:visible" viewBox="0 0 31 31"><rect x="0.75" y="0.75" width="29.2" height="29.7" fill="none" stroke="#9ba0a4" stroke-width="1.6"/><path d="M6.8 15.2 L13.6 21.1 L26 9.2" fill="none" stroke="#a3a8ac" stroke-width="2.6"/></svg>
<div style="left:1491.50px;top:1576.40px;width:362.30px;height:45.94px;background:linear-gradient(#fefefe,#ededed);border:1.5px solid #cdcdcd;border-radius:5px;box-sizing:border-box"></div>
<svg style="position:absolute;left:1821.00px;top:1595.70px;width:18px;height:10px;overflow:visible" viewBox="0 0 18 10"><path d="M0.5 0.5 H16.5 L8.5 9 Z" fill="#9c9c9c"/></svg>
<div class="t" style="left:1501.93px;top:1587.64px;font-size:27px;line-height:27px;font-weight:400;color:#000;transform:scaleX(0.9853);transform-origin:0 0;">kerngesteuert</div>
<div style="left:1858.50px;top:1576.40px;width:132.00px;height:45.94px;background:linear-gradient(#fefefe,#ededed);border:1.5px solid #cdcdcd;border-radius:5px;box-sizing:border-box"></div>
<svg style="position:absolute;left:1958.50px;top:1595.70px;width:18px;height:10px;overflow:visible" viewBox="0 0 18 10"><path d="M0.5 0.5 H16.5 L8.5 9 Z" fill="#9c9c9c"/></svg>
<div class="t" style="left:1868.90px;top:1587.64px;font-size:27px;line-height:27px;font-weight:400;color:#000;transform:scaleX(0.9775);transform-origin:0 0;">A</div>
<div style="left:1996.00px;top:1576.40px;width:127.50px;height:45.94px;background:linear-gradient(#fefefe,#ededed);border:1.5px solid #cdcdcd;border-radius:5px;box-sizing:border-box"></div>
<svg style="position:absolute;left:2091.50px;top:1595.70px;width:18px;height:10px;overflow:visible" viewBox="0 0 18 10"><path d="M0.5 0.5 H16.5 L8.5 9 Z" fill="#9c9c9c"/></svg>
<div class="t" style="left:2005.40px;top:1587.64px;font-size:27px;line-height:27px;font-weight:400;color:#000;transform:scaleX(0.9775);transform-origin:0 0;">A</div>
<svg style="position:absolute;left:2141.50px;top:1583.70px;width:31px;height:31px;overflow:visible" viewBox="0 0 31 31"><rect x="0.75" y="0.75" width="29.2" height="29.7" fill="none" stroke="#9ba0a4" stroke-width="1.6"/></svg>
<div style="left:2190.00px;top:1575.60px;width:81.60px;height:47.34px;background:linear-gradient(#fdfdfd,#ececec);border:1.5px solid #b5b5b5;border-radius:5px;box-sizing:border-box"></div>
<div class="t" style="left:2285.97px;top:1587.64px;font-size:27px;line-height:27px;font-weight:400;color:#000;transform:scaleX(1.0122);transform-origin:0 0;">Kontenart</div>
<div style="left:139.60px;top:539.90px;width:283.70px;height:51.10px;border:2.2px solid #1a1a1a;box-sizing:border-box"></div>
<div style="left:3073.30px;top:483.60px;width:1.20px;height:1170.00px;background:#c4c4c4"></div>
<div style="left:3074.50px;top:483.60px;width:30.10px;height:1139.40px;background:#e6e6e6"></div>
<div style="left:3074.50px;top:487.80px;width:30.10px;height:30.70px;background:linear-gradient(90deg,#fdfdfd,#f0f0f0)"></div>
<svg style="position:absolute;left:3079.50px;top:496.50px;width:19px;height:10px;overflow:visible" viewBox="0 0 19 10"><path d="M0.5 9.5 H18 L9.25 0.5 Z" fill="#5c5c5c"/></svg>
<div style="left:3074.50px;top:1166.80px;width:30.10px;height:89.80px;background:linear-gradient(90deg,#fdfdfd,#f1f1f1)"></div>
<div style="left:3074.50px;top:1165.50px;width:30.10px;height:1.80px;background:#bdbdbd"></div>
<div style="left:3074.50px;top:1255.50px;width:30.10px;height:1.80px;background:#bdbdbd"></div>
<div style="left:3074.50px;top:1592.40px;width:30.10px;height:29.50px;background:linear-gradient(90deg,#fdfdfd,#f0f0f0)"></div>
<svg style="position:absolute;left:3079.50px;top:1601.50px;width:19px;height:10px;overflow:visible" viewBox="0 0 19 10"><path d="M0.5 0.5 H18 L9.25 9.5 Z" fill="#5c5c5c"/></svg>
<div style="left:16.20px;top:1622.30px;width:3057.10px;height:1.90px;background:#c4c4c4"></div>
<div style="left:16.20px;top:1624.20px;width:3057.10px;height:29.40px;background:#e6e6e6"></div>
<div style="left:16.20px;top:1624.20px;width:31.20px;height:29.30px;background:linear-gradient(#fdfdfd,#f0f0f0)"></div>
<div style="left:47.40px;top:1624.20px;width:1.20px;height:29.30px;background:#c8c8c8"></div>
<svg style="position:absolute;left:25.50px;top:1628.50px;width:10px;height:19px;overflow:visible" viewBox="0 0 10 19"><path d="M9.5 0.5 V18 L0.5 9.25 Z" fill="#5c5c5c"/></svg>
<div style="left:48.60px;top:1624.20px;width:2816.40px;height:29.30px;background:linear-gradient(#fdfdfd,#f0f0f0)"></div>
<div style="left:2864.50px;top:1624.20px;width:1.80px;height:29.30px;background:#bdbdbd"></div>
<div style="left:3042.70px;top:1624.20px;width:30.60px;height:29.30px;background:linear-gradient(#fdfdfd,#f0f0f0)"></div>
<div style="left:3041.50px;top:1624.20px;width:1.20px;height:29.30px;background:#c8c8c8"></div>
<svg style="position:absolute;left:3052.00px;top:1628.50px;width:10px;height:19px;overflow:visible" viewBox="0 0 10 19"><path d="M0.5 0.5 V18 L9.5 9.25 Z" fill="#5c5c5c"/></svg>
<div style="left:3074.50px;top:1623.00px;width:30.10px;height:30.60px;background:#fff"></div>
<div style="left:6px;top:581px;width:3077px;height:120.4px;border:12.4px solid #e10000;border-radius:9px;box-sizing:border-box"></div>
<div style="left:0.00px;top:1671.50px;width:3120.00px;height:1.70px;background:#a9a9a9"></div>
<div style="left:0.00px;top:1673.20px;width:3120.00px;height:2.30px;background:#f0f0f0"></div>
<div style="left:0.00px;top:1675.50px;width:3120.00px;height:1.50px;background:#555b5e"></div>
</body></html>
